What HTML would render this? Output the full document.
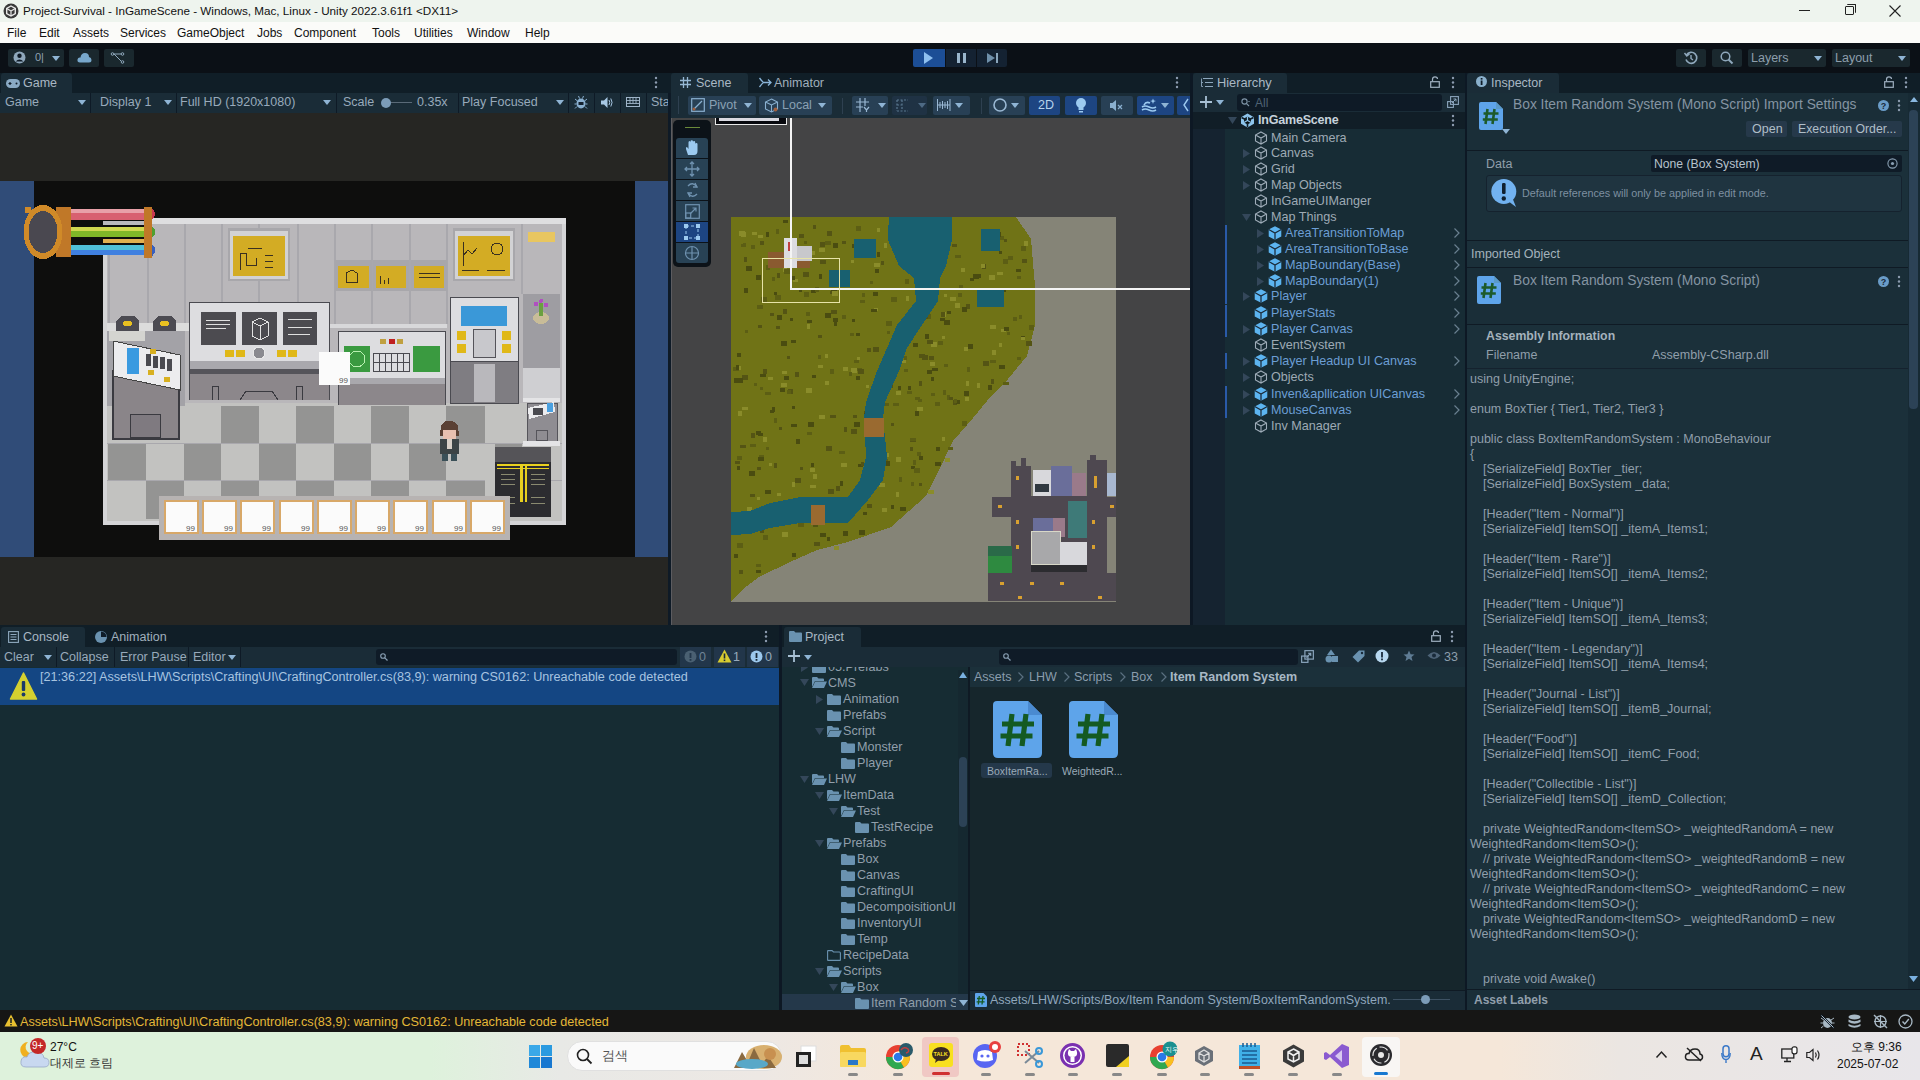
<!DOCTYPE html>
<html><head><meta charset="utf-8">
<style>
*{box-sizing:border-box}
html,body{margin:0;padding:0}
body{width:1920px;height:1080px;position:relative;overflow:hidden;background:#1c2d3a;font-family:"Liberation Sans",sans-serif;color:#b4c0c8;font-size:12.5px}
.a{position:absolute}
.t{position:absolute;white-space:pre;line-height:1}
.btn{position:absolute;background:#24384a;border-radius:2px}
.dd{position:absolute;width:0;height:0;border-left:4px solid transparent;border-right:4px solid transparent;border-top:5px solid #8fb4d4}
svg{position:absolute;overflow:visible}
</style></head><body>
<!-- title bar -->
<div class="a" style="left:0;top:0;width:1920px;height:22px;background:#eef4ee"></div>
<svg style="left:3px;top:3px" width="16" height="16" viewBox="0 0 16 16"><circle cx="8" cy="8" r="7.5" fill="#3a3a3a"/><path d="M8 3 L12.3 5.5 L12.3 10.5 L8 13 L3.7 10.5 L3.7 5.5 Z" fill="none" stroke="#e8e8e8" stroke-width="1.4"/><path d="M8 8 L8 13 M8 8 L3.7 5.5 M8 8 L12.3 5.5" stroke="#e8e8e8" stroke-width="1.2"/></svg>
<div class="t" style="left:23px;top:5px;font-size:11.7px;color:#111">Project-Survival - InGameScene - Windows, Mac, Linux - Unity 2022.3.61f1 &lt;DX11&gt;</div>
<div class="a" style="left:1799px;top:10px;width:11px;height:1px;background:#222"></div>
<div class="a" style="left:1845px;top:6px;width:9px;height:9px;border:1px solid #222;border-radius:1px"></div>
<div class="a" style="left:1847px;top:4px;width:9px;height:9px;border-top:1px solid #222;border-right:1px solid #222;border-radius:1px"></div>
<svg style="left:1889px;top:5px" width="12" height="12"><path d="M0.5 0.5 L11.5 11.5 M11.5 0.5 L0.5 11.5" stroke="#222" stroke-width="1.1"/></svg>

<!-- menu bar -->
<div class="a" style="left:0;top:22px;width:1920px;height:21px;background:#fbfbf9"></div>
<div class="t" style="left:7px;top:27px;font-size:12px;color:#111">File</div>
<div class="t" style="left:39px;top:27px;font-size:12px;color:#111">Edit</div>
<div class="t" style="left:73px;top:27px;font-size:12px;color:#111">Assets</div>
<div class="t" style="left:120px;top:27px;font-size:12px;color:#111">Services</div>
<div class="t" style="left:177px;top:27px;font-size:12px;color:#111">GameObject</div>
<div class="t" style="left:257px;top:27px;font-size:12px;color:#111">Jobs</div>
<div class="t" style="left:294px;top:27px;font-size:12px;color:#111">Component</div>
<div class="t" style="left:372px;top:27px;font-size:12px;color:#111">Tools</div>
<div class="t" style="left:414px;top:27px;font-size:12px;color:#111">Utilities</div>
<div class="t" style="left:467px;top:27px;font-size:12px;color:#111">Window</div>
<div class="t" style="left:525px;top:27px;font-size:12px;color:#111">Help</div>

<!-- main toolbar -->
<div class="a" style="left:0;top:43px;width:1920px;height:30px;background:#0b1016"></div>
<div class="btn" style="left:8px;top:49px;width:56px;height:18px;background:#1a282e"></div>
<svg style="left:13px;top:51px" width="13" height="13" viewBox="0 0 13 13"><circle cx="6.5" cy="6.5" r="6" fill="#8fa8bc"/><circle cx="6.5" cy="4.8" r="2.2" fill="#0e1a26"/><path d="M2.5 10.5 Q6.5 6.5 10.5 10.5" fill="#0e1a26"/></svg>
<div class="t" style="left:35px;top:52px;font-size:11px;color:#8fa0b0">0|</div>
<div class="dd" style="left:52px;top:56px;border-top-color:#8fb4d4"></div>
<div class="btn" style="left:69px;top:49px;width:30px;height:18px;background:#1a282e"></div>
<svg style="left:77px;top:52px" width="15" height="11" viewBox="0 0 15 11"><path d="M3 10.5 Q0 10.5 0.5 7.5 Q1 5 3.5 5.5 Q4 1 8 1 Q12 1 12 5 Q14.5 5.5 14.5 8 Q14.5 10.5 12 10.5 Z" fill="#78a8cc"/></svg>
<div class="btn" style="left:104px;top:49px;width:30px;height:18px;background:#1a282e"></div>
<svg style="left:111px;top:52px" width="14" height="12" viewBox="0 0 14 12"><circle cx="1.5" cy="2" r="1.3" fill="none" stroke="#8fa8bc"/><circle cx="11.5" cy="2" r="1.3" fill="none" stroke="#8fa8bc"/><circle cx="11.5" cy="10" r="1.3" fill="none" stroke="#8fa8bc"/><path d="M3 2 L10 2 M3 2 L10 9" stroke="#8fa8bc" fill="none"/></svg>

<!-- play controls -->
<div class="btn" style="left:913px;top:49px;width:32px;height:18px;background:#1c4e96;border-radius:2px 0 0 2px"></div>
<svg style="left:924px;top:52px" width="10" height="12"><path d="M0 0 L9 6 L0 12 Z" fill="#8ec0f0"/></svg>
<div class="btn" style="left:946px;top:49px;width:30px;height:18px;background:#142232;border-radius:0"></div>
<div class="a" style="left:957px;top:53px;width:3px;height:10px;background:#9ab6cc"></div>
<div class="a" style="left:963px;top:53px;width:3px;height:10px;background:#9ab6cc"></div>
<div class="btn" style="left:977px;top:49px;width:30px;height:18px;background:#142232;border-radius:0 2px 2px 0"></div>
<svg style="left:987px;top:53px" width="12" height="10"><path d="M0 0 L8 5 L0 10 Z" fill="#6f90aa"/><rect x="9" y="0" width="2" height="10" fill="#8aa6bc"/></svg>

<!-- right toolbar -->
<div class="btn" style="left:1676px;top:49px;width:30px;height:18px;background:#1a282e"></div>
<svg style="left:1684px;top:51px" width="14" height="14" viewBox="0 0 14 14"><path d="M2.5 4 A5.5 5.5 0 1 1 2 8.5" fill="none" stroke="#8fa8bc" stroke-width="1.6"/><path d="M0.5 2 L2.8 5 L5.5 3" fill="none" stroke="#8fa8bc" stroke-width="1.4"/><path d="M7 4 L7 7.5 L9 9" fill="none" stroke="#8fa8bc" stroke-width="1.4"/></svg>
<div class="btn" style="left:1712px;top:49px;width:30px;height:18px;background:#1a282e"></div>
<svg style="left:1720px;top:51px" width="14" height="14"><circle cx="5.5" cy="5.5" r="4.3" fill="none" stroke="#8fa8bc" stroke-width="1.5"/><path d="M8.5 8.5 L12.5 12.5" stroke="#8fa8bc" stroke-width="2"/></svg>
<div class="btn" style="left:1748px;top:49px;width:78px;height:18px;background:#1a282e"></div>
<div class="t" style="left:1751px;top:52px;font-size:12.5px;color:#8d9eac">Layers</div>
<div class="dd" style="left:1814px;top:56px"></div>
<div class="btn" style="left:1832px;top:49px;width:78px;height:18px;background:#1a282e"></div>
<div class="t" style="left:1835px;top:52px;font-size:12.5px;color:#8d9eac">Layout</div>
<div class="dd" style="left:1898px;top:56px"></div>
<!-- panel header strips -->
<div class="a" style="left:0;top:73px;width:1920px;height:20px;background:#101e27"></div>
<!-- Game tab -->
<div class="a" style="left:1px;top:73px;width:71px;height:20px;background:#1a2c37;border-radius:3px 3px 0 0"></div>
<svg style="left:6px;top:79px" width="14" height="9" viewBox="0 0 14 9"><rect x="0" y="0" width="14" height="9" rx="4.5" fill="#8aaac4"/><path d="M2.5 4.5 H5.5 M4 3 V6" stroke="#0f1c28" stroke-width="1.2"/><circle cx="10.5" cy="4.5" r="1" fill="#0f1c28"/></svg>
<div class="t" style="left:23px;top:77px;font-size:12.5px;color:#a9b8c4">Game</div>
<svg style="left:654px;top:76px" width="4" height="13"><circle cx="2" cy="2" r="1.2" fill="#8d9cb0"/><circle cx="2" cy="6.5" r="1.2" fill="#8d9cb0"/><circle cx="2" cy="11" r="1.2" fill="#8d9cb0"/></svg>

<!-- Game toolbar -->
<div class="a" style="left:0;top:93px;width:671px;height:20px;background:#1a2c37"></div>
<div class="t" style="left:5px;top:96px;font-size:12.5px;color:#98aabb">Game</div>
<div class="dd" style="left:78px;top:100px"></div>
<div class="a" style="left:90px;top:93px;width:1px;height:20px;background:#0e1a26"></div>
<div class="t" style="left:100px;top:96px;font-size:12.5px;color:#98aabb">Display 1</div>
<div class="dd" style="left:164px;top:100px"></div>
<div class="a" style="left:176px;top:93px;width:1px;height:20px;background:#0e1a26"></div>
<div class="t" style="left:180px;top:96px;font-size:12.5px;color:#98aabb">Full HD (1920x1080)</div>
<div class="dd" style="left:323px;top:100px"></div>
<div class="a" style="left:336px;top:93px;width:1px;height:20px;background:#0e1a26"></div>
<div class="t" style="left:343px;top:96px;font-size:12.5px;color:#98aabb">Scale</div>
<div class="a" style="left:386px;top:102px;width:26px;height:1px;background:#5a6a78"></div>
<div class="a" style="left:381px;top:98px;width:10px;height:10px;border-radius:5px;background:#7c9cb8"></div>
<div class="t" style="left:417px;top:96px;font-size:12.5px;color:#98aabb">0.35x</div>
<div class="a" style="left:458px;top:93px;width:1px;height:20px;background:#0e1a26"></div>
<div class="t" style="left:462px;top:96px;font-size:12.5px;color:#98aabb">Play Focused</div>
<div class="dd" style="left:556px;top:100px"></div>
<div class="a" style="left:568px;top:93px;width:1px;height:20px;background:#0e1a26"></div>
<svg style="left:574px;top:95px" width="14" height="14" viewBox="0 0 14 14"><ellipse cx="7" cy="8.5" rx="4.5" ry="5" fill="#8ab0d0"/><rect x="4.5" y="7" width="5" height="3" fill="#13202e"/><path d="M1 4 L3.5 6 M13 4 L10.5 6 M0.5 9 H2.5 M13.5 9 H11.5 M1 13.5 L3 11.5 M13 13.5 L11 11.5 M4.5 1 L5.5 3.5 M9.5 1 L8.5 3.5" stroke="#8ab0d0" stroke-width="1"/></svg>
<div class="a" style="left:594px;top:93px;width:1px;height:20px;background:#0e1a26"></div>
<svg style="left:601px;top:97px" width="12" height="11" viewBox="0 0 12 11"><path d="M0 3.5 H3 L6.5 0 V11 L3 7.5 H0 Z" fill="#a8c8e4"/><path d="M8 3 Q9.5 5.5 8 8 M9.8 1.5 Q12.3 5.5 9.8 9.5" fill="none" stroke="#a8c8e4" stroke-width="1"/></svg>
<div class="a" style="left:620px;top:93px;width:1px;height:20px;background:#0e1a26"></div>
<svg style="left:626px;top:97px" width="14" height="10" viewBox="0 0 14 10"><rect x="0.5" y="0.5" width="13" height="9" fill="none" stroke="#9fb4c8"/><path d="M0.5 3.5 H13.5 M0.5 6.5 H13.5 M4 0.5 V6.5 M7 0.5 V6.5 M10 0.5 V6.5" stroke="#9fb4c8" stroke-width="0.9"/></svg>
<div class="a" style="left:646px;top:93px;width:1px;height:20px;background:#0e1a26"></div>
<div class="t" style="left:651px;top:96px;font-size:12.5px;color:#98aabb">Sta</div>
<div class="a" style="left:668px;top:93px;width:3px;height:532px;background:#0e1a26"></div>

<!-- Scene tab -->
<div class="a" style="left:671px;top:73px;width:77px;height:20px;background:#1a2c37;border-radius:3px 3px 0 0"></div>
<svg style="left:680px;top:77px" width="11" height="11" viewBox="0 0 11 11"><path d="M3.5 0 V11 M7.5 0 V11 M0 3.5 H11 M0 7.5 H11" stroke="#96b8d4" stroke-width="1.3"/></svg>
<div class="t" style="left:696px;top:77px;font-size:12.5px;color:#a9b8c4">Scene</div>
<svg style="left:759px;top:77px" width="13" height="11" viewBox="0 0 13 11"><path d="M0.5 1 Q3 4.5 4.5 5.5 Q3 6.5 0.5 10 M4.5 5.5 H12 M9 2.5 L12 5.5 L9 8.5" fill="none" stroke="#8ab4d8" stroke-width="1.3"/></svg>
<div class="t" style="left:774px;top:77px;font-size:12.5px;color:#a0b0bd">Animator</div>
<svg style="left:1175px;top:76px" width="4" height="13"><circle cx="2" cy="2" r="1.2" fill="#8d9cb0"/><circle cx="2" cy="6.5" r="1.2" fill="#8d9cb0"/><circle cx="2" cy="11" r="1.2" fill="#8d9cb0"/></svg>

<!-- Hierarchy tab -->
<div class="a" style="left:1193px;top:73px;width:94px;height:20px;background:#1a2c37;border-radius:3px 3px 0 0"></div>
<svg style="left:1201px;top:78px" width="12" height="10" viewBox="0 0 12 10"><path d="M2 0.5 H12 M4 4.5 H12 M4 8.5 H12" stroke="#8ea8be" stroke-width="1.1"/><path d="M0.5 0.5 V8.5 M0.5 4.5 H2 M0.5 8.5 H2" stroke="#8ea8be" stroke-width="0.9"/></svg>
<div class="t" style="left:1217px;top:77px;font-size:12.8px;color:#a9b8c4">Hierarchy</div>
<svg style="left:1430px;top:76px" width="10" height="12" viewBox="0 0 10 12"><rect x="0.7" y="5.7" width="8.6" height="5.6" fill="none" stroke="#9fb0c0" stroke-width="1.2"/><path d="M2.5 5.5 V3.5 Q2.5 0.8 5 0.8 Q7.5 0.8 7.5 3" fill="none" stroke="#9fb0c0" stroke-width="1.2"/></svg>
<svg style="left:1451px;top:76px" width="4" height="13"><circle cx="2" cy="2" r="1.2" fill="#8d9cb0"/><circle cx="2" cy="6.5" r="1.2" fill="#8d9cb0"/><circle cx="2" cy="11" r="1.2" fill="#8d9cb0"/></svg>

<!-- Inspector tab -->
<div class="a" style="left:1467px;top:73px;width:92px;height:20px;background:#1a2c37;border-radius:3px 3px 0 0"></div>
<svg style="left:1476px;top:76px" width="11" height="11"><circle cx="5.5" cy="5.5" r="5.5" fill="#8ab0cc"/><rect x="4.7" y="4.5" width="1.8" height="4.5" fill="#0f1c28"/><rect x="4.7" y="2" width="1.8" height="1.6" fill="#0f1c28"/></svg>
<div class="t" style="left:1491px;top:77px;font-size:12.5px;color:#a9b8c4">Inspector</div>
<svg style="left:1884px;top:76px" width="10" height="12" viewBox="0 0 10 12"><rect x="0.7" y="5.7" width="8.6" height="5.6" fill="none" stroke="#9fb0c0" stroke-width="1.2"/><path d="M2.5 5.5 V3.5 Q2.5 0.8 5 0.8 Q7.5 0.8 7.5 3" fill="none" stroke="#9fb0c0" stroke-width="1.2"/></svg>
<svg style="left:1904px;top:76px" width="4" height="13"><circle cx="2" cy="2" r="1.2" fill="#8d9cb0"/><circle cx="2" cy="6.5" r="1.2" fill="#8d9cb0"/><circle cx="2" cy="11" r="1.2" fill="#8d9cb0"/></svg>

<!-- vertical panel separators -->
<div class="a" style="left:1190px;top:73px;width:3px;height:552px;background:#0d1824"></div>
<div class="a" style="left:1465px;top:73px;width:2px;height:937px;background:#0d1824"></div>
<!-- Game view -->
<svg style="left:0;top:113px" width="668" height="512" viewBox="0 113 668 512" shape-rendering="crispEdges">
<rect x="0" y="113" width="668" height="512" fill="#262623"/>
<rect x="0" y="181" width="668" height="376" fill="#0e0e0d"/>
<rect x="0" y="181" width="34" height="376" fill="#304c78"/>
<rect x="635" y="181" width="33" height="376" fill="#304c78"/>
<!-- room -->
<rect x="103" y="218" width="463" height="307" fill="#d4d4d6"/>
<rect x="107" y="223" width="455" height="298" fill="#b9b7ba"/>
<!-- top wall band -->
<rect x="103" y="218" width="463" height="6" fill="#dedee0"/>
<!-- wall panel lines -->
<g fill="#a9a8ad">
<rect x="108" y="224" width="2" height="100"/><rect x="147" y="224" width="2" height="100"/><rect x="184" y="224" width="2" height="100"/><rect x="221" y="224" width="2" height="78"/><rect x="258" y="224" width="2" height="78"/><rect x="297" y="224" width="2" height="78"/><rect x="334" y="224" width="2" height="100"/><rect x="371" y="224" width="2" height="100"/><rect x="409" y="224" width="2" height="100"/><rect x="446" y="224" width="2" height="100"/><rect x="521" y="224" width="2" height="70"/>
</g>
<rect x="107" y="324" width="340" height="4" fill="#d8d8da"/>
<!-- yellow screens -->
<rect x="228" y="228" width="62" height="53" fill="#a8a7ab"/><rect x="230" y="231" width="58" height="48" fill="#d2d2d4"/><rect x="233" y="236" width="52" height="40" fill="#d3ac24"/>
<g stroke="#3a3020" stroke-width="1" fill="none"><path d="M240 270 V253 H246 V265 H256 V258 M248 248 H262 M265 255 H273 M265 261 H273 M265 267 H273"/></g>
<rect x="453" y="228" width="62" height="53" fill="#a8a7ab"/><rect x="455" y="231" width="58" height="48" fill="#d2d2d4"/><rect x="458" y="236" width="52" height="40" fill="#d3ac24"/>
<g stroke="#3a3020" stroke-width="1" fill="none"><path d="M463 266 V242 M463 256 L468 250 L472 254 L477 248"/><circle cx="497" cy="249" r="6"/><path d="M462 270 H479 M487 270 H505"/></g>
<rect x="335" y="260" width="37" height="31" fill="#a8a7ab"/><rect x="338" y="266" width="31" height="22" fill="#d3ac24"/>
<rect x="373" y="260" width="36" height="31" fill="#a8a7ab"/><rect x="376" y="266" width="30" height="22" fill="#d3ac24"/>
<rect x="411" y="260" width="36" height="31" fill="#a8a7ab"/><rect x="414" y="266" width="30" height="22" fill="#d3ac24"/>
<g stroke="#3a3020" stroke-width="1" fill="none"><path d="M346 282 V273 L352 270 L357 273 V282 Z M380 284 V276 M384 284 V280 M388 284 V278 M419 273 H440 M419 277 H440"/></g>
<rect x="528" y="232" width="27" height="10" fill="#e8c660"/>
<!-- floor -->
<rect x="107" y="403" width="455" height="118" fill="#c2c2c0"/>
<g fill="#949493">
<rect x="221" y="406" width="38" height="38"/><rect x="296" y="406" width="38" height="38"/><rect x="371" y="406" width="38" height="38"/><rect x="446" y="406" width="39" height="38"/>
<rect x="108" y="444" width="38" height="37"/><rect x="184" y="444" width="37" height="37"/><rect x="259" y="444" width="37" height="37"/><rect x="334" y="444" width="37" height="37"/><rect x="409" y="444" width="37" height="37"/><rect x="485" y="444" width="37" height="37"/>
<rect x="146" y="481" width="38" height="38"/><rect x="221" y="481" width="38" height="38"/><rect x="296" y="481" width="38" height="38"/><rect x="371" y="481" width="38" height="38"/><rect x="446" y="481" width="39" height="38"/>
</g>
<g fill="#a9a8ad"><rect x="107" y="443" width="455" height="1"/><rect x="107" y="480" width="455" height="1"/></g>
<!-- right column -->
<rect x="523" y="294" width="37" height="74" fill="#9e9da2"/>
<ellipse cx="541" cy="318" rx="8" ry="6" fill="#c8bc98"/><rect x="539" y="303" width="4" height="13" fill="#6aa040"/><circle cx="536" cy="304" r="2.2" fill="#b050c0"/><circle cx="546" cy="305" r="2.2" fill="#b050c0"/><circle cx="541" cy="301" r="2" fill="#b050c0"/>
<rect x="523" y="368" width="37" height="30" fill="#cfcfd2"/>
<rect x="523" y="398" width="37" height="4" fill="#e4e4e6"/>
<rect x="527" y="403" width="30" height="38" fill="#8f8d92" stroke="#55545a"/>
<rect x="536" y="430" width="11" height="10" fill="none" stroke="#55545a"/>
<path d="M528 408 L554 402 L555 412 L529 419 Z" fill="#ececee"/><rect x="547" y="403" width="6" height="9" fill="#4aa0e0"/><rect x="533" y="408" width="10" height="7" fill="#4a4a50"/>
<rect x="523" y="441" width="37" height="5" fill="#e4e4e6"/>
<!-- left machine -->
<rect x="107" y="330" width="78" height="76" fill="#a3a2a7"/>
<rect x="113" y="371" width="66" height="68" fill="#8a8589"/><rect x="113" y="371" width="66" height="68" fill="none" stroke="#3a3a40" stroke-width="1.5"/>
<rect x="130" y="414" width="30" height="23" fill="#7f7a80" stroke="#3a3a40"/>
<path d="M113 341 L180 355 L180 390 L113 376 Z" fill="#ececee" stroke="#444" stroke-width="1"/>
<rect x="127" y="348" width="12" height="26" fill="#3a9ae0"/>
<g fill="#4a4a50"><rect x="146" y="354" width="5" height="12"/><rect x="153" y="356" width="5" height="12"/><rect x="160" y="357" width="5" height="12"/><rect x="167" y="359" width="5" height="12"/></g>
<g fill="#d8b020"><rect x="150" y="349" width="6" height="5"/><rect x="148" y="370" width="6" height="5"/><rect x="164" y="377" width="6" height="5"/></g>
<!-- lamps -->
<rect x="107" y="323" width="82" height="8" fill="#dcdcdc"/>
<path d="M121 316 H134 L139 321 V331 H116 V321 Z" fill="#4c4b52"/><ellipse cx="127.5" cy="323.5" rx="4.5" ry="3" fill="#e8c020"/>
<path d="M158 316 H171 L176 321 V331 H153 V321 Z" fill="#4c4b52"/><ellipse cx="164.5" cy="323.5" rx="4.5" ry="3" fill="#e8c020"/>
<rect x="109" y="331" width="36" height="10" fill="#d4d4d0"/>
<!-- console desk 1 -->
<rect x="189" y="302" width="141" height="98" fill="#4a4a50"/>
<rect x="190" y="303" width="139" height="58" fill="#dddde0"/>
<rect x="201" y="312" width="35" height="33" fill="#4c4b50"/><rect x="242" y="312" width="35" height="33" fill="#4c4b50"/><rect x="283" y="312" width="34" height="33" fill="#4c4b50"/>
<g stroke="#e0e0e0" fill="none" stroke-width="1"><path d="M206 320 H230 M206 324 H230 M206 328 H226 M252 322 L260 318 L268 322 V336 L260 340 L252 336 Z M252 322 L260 326 L268 322 M260 326 V340 M288 319 H312 M288 327 H312 M288 334 H310"/></g>
<g fill="#e0b818"><rect x="225" y="350" width="9" height="7"/><rect x="236" y="350" width="9" height="7"/><rect x="277" y="350" width="9" height="7"/><rect x="288" y="350" width="9" height="7"/></g>
<circle cx="259" cy="353" r="6" fill="#8a8a90" stroke="#e8e8e8"/>
<rect x="190" y="361" width="139" height="8" fill="#a9a8ad"/>
<rect x="190" y="369" width="139" height="5" fill="#55545a"/>
<rect x="190" y="374" width="139" height="26" fill="#8c878b"/>
<g fill="none" stroke="#3a3a40"><path d="M212 400 V386 H218 V400 M296 400 V386 H302 V400 M240 400 L246 391 H272 L278 400"/></g>
<!-- console desk 2 -->
<rect x="338" y="331" width="108" height="74" fill="#4a4a50"/>
<rect x="339" y="332" width="106" height="46" fill="#dddde0"/>
<rect x="344" y="346" width="26" height="26" fill="#3a9a40"/><circle cx="357" cy="359" r="8" fill="none" stroke="#b8f0b0"/>
<rect x="413" y="346" width="27" height="26" fill="#3a9a40"/>
<g fill="none" stroke="#4a4a50"><path d="M373 353 H409 V371 H373 Z M379 353 V371 M385 353 V371 M391 353 V371 M397 353 V371 M403 353 V371 M373 362 H409"/></g>
<g fill="#c0a040"><rect x="380" y="339" width="6" height="5"/><rect x="397" y="339" width="6" height="5"/></g><rect x="389" y="339" width="6" height="5" fill="#c02020"/>
<rect x="339" y="378" width="106" height="6" fill="#a9a8ad"/>
<rect x="339" y="384" width="106" height="21" fill="#8c878b"/>
<!-- keypad machine -->
<rect x="450" y="297" width="69" height="107" fill="#4a4a50"/>
<rect x="451" y="298" width="67" height="63" fill="#dddde0"/>
<rect x="461" y="306" width="46" height="20" fill="#3a98d8"/>
<g fill="#e0b818"><rect x="457" y="331" width="9" height="9"/><rect x="457" y="344" width="9" height="9"/><rect x="502" y="331" width="9" height="9"/><rect x="502" y="344" width="9" height="9"/></g>
<rect x="473" y="329" width="22" height="28" fill="#c8c8cc" stroke="#55545a"/>
<rect x="451" y="362" width="67" height="41" fill="#7f7d82"/><rect x="474" y="364" width="21" height="38" fill="#b9b8bc"/>
<!-- dark device -->
<rect x="485" y="444" width="10" height="37" fill="#c2c2c0"/>
<rect x="495" y="447" width="56" height="70" fill="#2c2c30"/>
<rect x="495" y="447" width="56" height="15" fill="#555458"/>
<g fill="#e8d020"><rect x="497" y="464" width="52" height="2"/><rect x="497" y="468" width="52" height="1"/><rect x="520" y="464" width="3" height="38"/><rect x="525" y="464" width="2" height="38"/></g>
<g fill="#8a8a70"><rect x="501" y="474" width="14" height="1"/><rect x="501" y="479" width="14" height="1"/><rect x="501" y="484" width="14" height="1"/><rect x="531" y="474" width="14" height="1"/><rect x="531" y="479" width="14" height="1"/><rect x="531" y="484" width="14" height="1"/><rect x="501" y="497" width="14" height="1"/><rect x="501" y="503" width="14" height="1"/><rect x="531" y="497" width="14" height="1"/><rect x="531" y="503" width="14" height="1"/></g>
<!-- character -->
<path d="M441 425 Q449 416 458 425 L459 436 L440 436 Z" fill="#5a4034"/>
<rect x="443" y="430" width="13" height="9" fill="#e8c0b0"/>
<rect x="440" y="439" width="19" height="15" fill="#3c4446"/>
<rect x="447" y="439" width="5" height="10" fill="#d8d0c8"/>
<rect x="442" y="454" width="6" height="7" fill="#3a5058"/><rect x="451" y="454" width="6" height="7" fill="#3a5058"/>
<!-- inventory bar -->
<rect x="159" y="496" width="351" height="44" fill="#b7b3b2"/>
<g fill="#fbfbfb" stroke="#d8a868" stroke-width="2">
<rect x="165" y="501" width="33" height="32"/><rect x="203" y="501" width="33" height="32"/><rect x="241" y="501" width="33" height="32"/><rect x="280" y="501" width="33" height="32"/><rect x="318" y="501" width="33" height="32"/><rect x="356" y="501" width="33" height="32"/><rect x="394" y="501" width="33" height="32"/><rect x="433" y="501" width="33" height="32"/><rect x="471" y="501" width="33" height="32"/>
</g>
<g font-family="Liberation Sans" font-size="8" fill="#555"><text x="186" y="531">99</text><text x="224" y="531">99</text><text x="262" y="531">99</text><text x="301" y="531">99</text><text x="339" y="531">99</text><text x="377" y="531">99</text><text x="415" y="531">99</text><text x="454" y="531">99</text><text x="492" y="531">99</text></g>
<!-- cursor item -->
<rect x="319" y="352" width="31" height="33" fill="#fbfbfb"/>
<text x="339" y="383" font-family="Liberation Sans" font-size="8" fill="#555">99</text>
<!-- HUD -->
<g>
<rect x="71" y="209" width="73" height="11" fill="#d86070"/><rect x="71" y="209" width="73" height="4" fill="#e8a0a8"/>
<rect x="71" y="220" width="73" height="7" fill="#0e0e0d"/><rect x="103" y="221" width="41" height="4" fill="#b8b8bc"/>
<rect x="71" y="227" width="73" height="10" fill="#80b828"/><rect x="71" y="227" width="73" height="4" fill="#d0d850"/>
<rect x="71" y="237" width="73" height="8" fill="#0e0e0d"/><rect x="103" y="239" width="41" height="4" fill="#e0b050"/>
<rect x="71" y="245" width="73" height="10" fill="#4080e0"/><rect x="71" y="245" width="73" height="5" fill="#50c0d8"/>
<path d="M152 208 Q158 214 152 220 Z" fill="#c83850"/><path d="M152 227 Q159 232 152 238 Z" fill="#50a030"/><path d="M152 245 Q159 250 152 256 Z" fill="#3860c0"/>
<rect x="144" y="207" width="8" height="51" fill="#c07828"/>
<rect x="56" y="207" width="15" height="50" fill="#c07828"/>
<ellipse cx="43" cy="232" rx="19.5" ry="27" fill="#d08a28"/>
<ellipse cx="43" cy="232" rx="14.5" ry="21" fill="#4a4850"/>
<circle cx="28" cy="210" r="3.5" fill="#d08a28"/>
</g>
</svg>
<!-- Scene toolbar -->
<div class="a" style="left:671px;top:93px;width:519px;height:25px;background:#1a2c37"></div>
<div class="a" style="left:678px;top:96px;width:1px;height:18px;background:#2e4050"></div>
<div class="btn" style="left:688px;top:96px;width:68px;height:19px;background:#284055"></div>
<svg style="left:691px;top:98px" width="14" height="14" viewBox="0 0 14 14"><rect x="0.7" y="0.7" width="12.6" height="12.6" fill="none" stroke="#8ab0d0" stroke-width="1.2"/><path d="M3 11 L11 3" stroke="#8ab0d0" stroke-width="1.2"/><circle cx="3" cy="11" r="1.5" fill="#a06040"/></svg>
<div class="t" style="left:709px;top:99px;font-size:12.5px;color:#8aa0b4">Pivot</div>
<div class="dd" style="left:744px;top:103px"></div>
<div class="btn" style="left:759px;top:96px;width:73px;height:19px;background:#284055"></div>
<svg style="left:764px;top:98px" width="15" height="15" viewBox="0 0 15 15"><path d="M7.5 1 L13.5 4 V11 L7.5 14 L1.5 11 V4 Z M1.5 4 L7.5 7 L13.5 4 M7.5 7 V14" fill="none" stroke="#8ab0d0" stroke-width="1.1"/><circle cx="11.5" cy="11.5" r="2" fill="#a06040"/></svg>
<div class="t" style="left:782px;top:99px;font-size:12.5px;color:#8aa0b4">Local</div>
<div class="dd" style="left:818px;top:103px"></div>
<div class="a" style="left:842px;top:98px;width:1px;height:16px;background:#2e4050"></div>
<div class="btn" style="left:852px;top:96px;width:36px;height:19px;background:#284055"></div>
<svg style="left:856px;top:98px" width="14" height="14" viewBox="0 0 14 14"><path d="M4 0 V14 M9 0 V8 M0 4 H13 M0 9 H7 M8 9 L10.5 12 L13 9 M10.5 12 V14" fill="none" stroke="#9ab8d4" stroke-width="1.2"/></svg>
<div class="dd" style="left:878px;top:103px"></div>
<div class="btn" style="left:892px;top:96px;width:35px;height:19px;background:#1f3244"></div>
<svg style="left:896px;top:99px" width="13" height="13" viewBox="0 0 13 13"><path d="M1 1 H12 M1 1 V12 M1 6 H6 M6 1 V12 M1 12 H12" fill="none" stroke="#5a7890" stroke-width="1.2" stroke-dasharray="2 1.5"/></svg>
<div class="dd" style="left:918px;top:103px;border-top-color:#4e6a84"></div>
<div class="btn" style="left:933px;top:96px;width:37px;height:19px;background:#284055"></div>
<svg style="left:937px;top:98px" width="14" height="14" viewBox="0 0 14 14"><path d="M0.5 1 V13 M13 1 V13 M0.5 7 H13 M3 4 V10 M5.5 3 V11 M8 4 V10 M10.5 3 V11" fill="none" stroke="#9ab8d4" stroke-width="1"/></svg>
<div class="dd" style="left:955px;top:103px"></div>
<div class="a" style="left:981px;top:98px;width:1px;height:16px;background:#2e4050"></div>
<div class="btn" style="left:989px;top:96px;width:36px;height:19px;background:#284055"></div>
<svg style="left:993px;top:98px" width="14" height="14"><circle cx="7" cy="7" r="6" fill="none" stroke="#9ab8d4" stroke-width="1.6"/></svg>
<div class="dd" style="left:1011px;top:103px"></div>
<div class="btn" style="left:1029px;top:96px;width:31px;height:19px;background:#1d4582"></div>
<div class="t" style="left:1038px;top:99px;font-size:12.5px;color:#b8d4ec">2D</div>
<div class="btn" style="left:1065px;top:96px;width:32px;height:19px;background:#1d4582"></div>
<svg style="left:1075px;top:97px" width="12" height="16" viewBox="0 0 12 16"><circle cx="6" cy="6" r="5" fill="#9ccaf0"/><rect x="3.5" y="10" width="5" height="3" fill="#9ccaf0"/><rect x="4" y="14" width="4" height="1.5" fill="#9ccaf0"/></svg>
<div class="btn" style="left:1101px;top:96px;width:32px;height:19px;background:#284055"></div>
<svg style="left:1110px;top:99px" width="14" height="13" viewBox="0 0 14 13"><path d="M0 4 H2.5 L6 1 V12 L2.5 9 H0 Z" fill="#8ab0d0"/><path d="M8 6 L12 10 M12 6 L8 10" stroke="#8ab0d0" stroke-width="1.2"/></svg>
<div class="btn" style="left:1137px;top:96px;width:37px;height:19px;background:#1d4582"></div>
<svg style="left:1141px;top:98px" width="16" height="14" viewBox="0 0 16 14"><path d="M1 9 Q4 7 8 9 Q12 11 15 9 M1 12 Q4 10 8 12 Q12 14 15 12 M3 7 Q5 3 9 5" fill="none" stroke="#9ccaf0" stroke-width="1.6"/><path d="M12 0.5 L12.8 2.5 L15 3 L12.8 3.8 L12 6 L11.2 3.8 L9 3 L11.2 2.5 Z" fill="#9ccaf0"/></svg>
<div class="dd" style="left:1161px;top:103px"></div>
<div class="btn" style="left:1177px;top:96px;width:13px;height:19px;background:#1d4582;border-radius:2px 0 0 2px"></div>
<svg style="left:1183px;top:99px" width="6" height="12"><path d="M5 0 L1 6 L5 12" fill="none" stroke="#9ccaf0" stroke-width="1.4"/></svg>

<!-- Scene view -->
<svg style="left:671px;top:118px" width="519" height="507" viewBox="671 118 519 507" shape-rendering="crispEdges">
<rect x="671" y="118" width="519" height="507" fill="#444445"/>
<rect x="671" y="118" width="1" height="507" fill="#5c5c60"/>
<rect x="731" y="217" width="385" height="385" fill="#858477"/>
<path d="M731 217 L1016 217 L1031 239 L1035 286 L1035 325 L1027 356 L1008 379 L992 395 L973 418 L953 441 L938 472 L926 496 L891 527 L848 542 L817 550 L790 562 L759 577 L743 589 L731 601 Z" fill="#707316"/>
<g><rect x="829" y="276" width="3" height="3" fill="#545414"/><rect x="842" y="241" width="4" height="3" fill="#545414"/><rect x="862" y="245" width="3" height="5" fill="#8a8c2a"/><rect x="751" y="433" width="4" height="5" fill="#545414"/><rect x="904" y="369" width="4" height="3" fill="#5c5e14"/><rect x="819" y="274" width="3" height="5" fill="#4a4c10"/><rect x="899" y="477" width="3" height="5" fill="#5c5e14"/><rect x="844" y="427" width="3" height="5" fill="#545414"/><rect x="917" y="407" width="6" height="4" fill="#8a8c2a"/><rect x="907" y="391" width="5" height="3" fill="#5c5e14"/><rect x="941" y="312" width="5" height="5" fill="#8a8c2a"/><rect x="768" y="377" width="5" height="3" fill="#8a8c2a"/><rect x="756" y="431" width="5" height="4" fill="#4a4c10"/><rect x="910" y="439" width="6" height="3" fill="#545414"/><rect x="930" y="242" width="5" height="5" fill="#8a8c2a"/><rect x="818" y="365" width="5" height="3" fill="#8a8c2a"/><rect x="839" y="451" width="6" height="3" fill="#5c5e14"/><rect x="961" y="268" width="4" height="4" fill="#8a8c2a"/><rect x="782" y="371" width="5" height="3" fill="#8a8c2a"/><rect x="990" y="325" width="6" height="4" fill="#8a8c2a"/><rect x="1017" y="276" width="4" height="3" fill="#5c5e14"/><rect x="929" y="224" width="4" height="4" fill="#4a4c10"/><rect x="734" y="378" width="5" height="5" fill="#4a4c10"/><rect x="886" y="453" width="3" height="4" fill="#8a8c2a"/><rect x="851" y="368" width="6" height="5" fill="#8a8c2a"/><rect x="751" y="245" width="4" height="4" fill="#5c5e14"/><rect x="766" y="447" width="3" height="3" fill="#5c5e14"/><rect x="915" y="246" width="4" height="5" fill="#8a8c2a"/><rect x="777" y="315" width="5" height="5" fill="#4a4c10"/><rect x="874" y="263" width="6" height="4" fill="#8a8c2a"/><rect x="877" y="252" width="3" height="5" fill="#4a4c10"/><rect x="953" y="400" width="4" height="5" fill="#545414"/><rect x="840" y="481" width="3" height="5" fill="#4a4c10"/><rect x="940" y="318" width="5" height="3" fill="#4a4c10"/><rect x="962" y="421" width="5" height="5" fill="#5c5e14"/><rect x="958" y="293" width="4" height="4" fill="#5c5e14"/><rect x="792" y="406" width="3" height="3" fill="#4a4c10"/><rect x="873" y="292" width="5" height="4" fill="#4a4c10"/><rect x="1017" y="357" width="4" height="3" fill="#5c5e14"/><rect x="873" y="347" width="6" height="5" fill="#545414"/><rect x="875" y="466" width="3" height="5" fill="#545414"/><rect x="956" y="400" width="4" height="4" fill="#4a4c10"/><rect x="947" y="395" width="3" height="5" fill="#5c5e14"/><rect x="783" y="267" width="4" height="5" fill="#8a8c2a"/><rect x="973" y="274" width="6" height="5" fill="#4a4c10"/><rect x="779" y="427" width="3" height="3" fill="#545414"/><rect x="978" y="299" width="5" height="3" fill="#4a4c10"/><rect x="882" y="508" width="5" height="4" fill="#8a8c2a"/><rect x="981" y="242" width="5" height="4" fill="#8a8c2a"/><rect x="772" y="277" width="3" height="4" fill="#5c5e14"/><rect x="777" y="273" width="3" height="5" fill="#545414"/><rect x="830" y="415" width="6" height="3" fill="#545414"/><rect x="807" y="324" width="3" height="5" fill="#8a8c2a"/><rect x="900" y="507" width="3" height="4" fill="#4a4c10"/><rect x="915" y="411" width="4" height="5" fill="#4a4c10"/><rect x="867" y="421" width="6" height="5" fill="#5c5e14"/><rect x="1013" y="317" width="4" height="4" fill="#5c5e14"/><rect x="857" y="368" width="5" height="3" fill="#5c5e14"/><rect x="860" y="300" width="5" height="3" fill="#5c5e14"/><rect x="842" y="315" width="4" height="4" fill="#5c5e14"/><rect x="955" y="255" width="6" height="3" fill="#5c5e14"/><rect x="781" y="383" width="6" height="4" fill="#8a8c2a"/><rect x="791" y="340" width="5" height="3" fill="#4a4c10"/><rect x="898" y="386" width="3" height="4" fill="#4a4c10"/><rect x="887" y="331" width="3" height="3" fill="#5c5e14"/><rect x="1022" y="259" width="5" height="4" fill="#545414"/><rect x="1002" y="288" width="4" height="4" fill="#4a4c10"/><rect x="854" y="422" width="6" height="5" fill="#4a4c10"/><rect x="760" y="241" width="4" height="4" fill="#545414"/><rect x="813" y="225" width="3" height="4" fill="#545414"/><rect x="914" y="303" width="5" height="3" fill="#8a8c2a"/><rect x="918" y="235" width="4" height="3" fill="#5c5e14"/><rect x="811" y="288" width="5" height="5" fill="#4a4c10"/><rect x="891" y="297" width="6" height="5" fill="#5c5e14"/><rect x="813" y="524" width="5" height="3" fill="#545414"/><rect x="738" y="411" width="4" height="5" fill="#8a8c2a"/><rect x="806" y="388" width="6" height="5" fill="#8a8c2a"/><rect x="1021" y="336" width="4" height="3" fill="#4a4c10"/><rect x="792" y="553" width="4" height="4" fill="#4a4c10"/><rect x="737" y="456" width="5" height="4" fill="#5c5e14"/><rect x="749" y="471" width="6" height="5" fill="#4a4c10"/><rect x="911" y="482" width="3" height="4" fill="#5c5e14"/><rect x="780" y="388" width="5" height="4" fill="#4a4c10"/><rect x="825" y="354" width="3" height="4" fill="#8a8c2a"/><rect x="758" y="325" width="4" height="3" fill="#545414"/><rect x="760" y="529" width="4" height="4" fill="#545414"/><rect x="850" y="333" width="4" height="3" fill="#5c5e14"/><rect x="928" y="490" width="6" height="4" fill="#8a8c2a"/><rect x="777" y="493" width="4" height="3" fill="#8a8c2a"/><rect x="774" y="418" width="3" height="5" fill="#5c5e14"/><rect x="758" y="235" width="5" height="3" fill="#8a8c2a"/><rect x="919" y="456" width="4" height="4" fill="#4a4c10"/><rect x="734" y="521" width="3" height="5" fill="#545414"/><rect x="954" y="399" width="3" height="4" fill="#5c5e14"/><rect x="950" y="297" width="6" height="4" fill="#8a8c2a"/><rect x="756" y="564" width="5" height="3" fill="#5c5e14"/><rect x="756" y="275" width="5" height="5" fill="#4a4c10"/><rect x="917" y="270" width="6" height="3" fill="#8a8c2a"/><rect x="813" y="474" width="4" height="5" fill="#8a8c2a"/><rect x="819" y="415" width="6" height="4" fill="#8a8c2a"/><rect x="896" y="337" width="3" height="4" fill="#545414"/><rect x="819" y="248" width="6" height="4" fill="#8a8c2a"/><rect x="796" y="439" width="4" height="5" fill="#4a4c10"/><rect x="1016" y="269" width="5" height="3" fill="#4a4c10"/><rect x="877" y="228" width="3" height="4" fill="#8a8c2a"/><rect x="853" y="495" width="6" height="4" fill="#8a8c2a"/><rect x="827" y="537" width="3" height="4" fill="#4a4c10"/><rect x="982" y="264" width="4" height="5" fill="#545414"/><rect x="1001" y="329" width="5" height="3" fill="#8a8c2a"/><rect x="756" y="570" width="5" height="3" fill="#4a4c10"/><rect x="763" y="535" width="5" height="5" fill="#5c5e14"/><rect x="807" y="320" width="5" height="3" fill="#4a4c10"/><rect x="966" y="381" width="3" height="5" fill="#8a8c2a"/><rect x="896" y="492" width="3" height="5" fill="#8a8c2a"/><rect x="867" y="504" width="5" height="4" fill="#545414"/><rect x="784" y="376" width="5" height="4" fill="#4a4c10"/><rect x="810" y="468" width="5" height="4" fill="#8a8c2a"/><rect x="769" y="463" width="3" height="3" fill="#8a8c2a"/><rect x="896" y="391" width="5" height="4" fill="#8a8c2a"/><rect x="774" y="292" width="3" height="3" fill="#4a4c10"/><rect x="898" y="340" width="5" height="4" fill="#5c5e14"/><rect x="856" y="376" width="4" height="4" fill="#4a4c10"/><rect x="833" y="243" width="5" height="5" fill="#4a4c10"/><rect x="770" y="410" width="4" height="3" fill="#4a4c10"/><rect x="999" y="365" width="6" height="4" fill="#4a4c10"/><rect x="739" y="231" width="6" height="5" fill="#8a8c2a"/><rect x="733" y="367" width="6" height="4" fill="#5c5e14"/><rect x="966" y="304" width="4" height="5" fill="#545414"/><rect x="869" y="428" width="3" height="3" fill="#5c5e14"/><rect x="925" y="334" width="4" height="5" fill="#4a4c10"/><rect x="890" y="385" width="3" height="3" fill="#545414"/><rect x="790" y="318" width="3" height="3" fill="#4a4c10"/><rect x="1029" y="325" width="5" height="5" fill="#5c5e14"/><rect x="874" y="308" width="4" height="3" fill="#8a8c2a"/><rect x="942" y="336" width="3" height="3" fill="#8a8c2a"/><rect x="757" y="305" width="6" height="4" fill="#5c5e14"/><rect x="879" y="483" width="6" height="4" fill="#8a8c2a"/><rect x="792" y="521" width="3" height="3" fill="#8a8c2a"/><rect x="1021" y="337" width="4" height="3" fill="#8a8c2a"/><rect x="799" y="507" width="5" height="3" fill="#8a8c2a"/><rect x="750" y="444" width="6" height="3" fill="#5c5e14"/><rect x="740" y="445" width="6" height="3" fill="#545414"/><rect x="788" y="389" width="5" height="5" fill="#545414"/><rect x="831" y="289" width="6" height="3" fill="#4a4c10"/><rect x="930" y="362" width="5" height="4" fill="#8a8c2a"/><rect x="783" y="220" width="5" height="3" fill="#4a4c10"/><rect x="900" y="507" width="6" height="4" fill="#4a4c10"/><rect x="977" y="383" width="3" height="5" fill="#8a8c2a"/><rect x="791" y="424" width="6" height="3" fill="#4a4c10"/><rect x="742" y="375" width="6" height="3" fill="#8a8c2a"/><rect x="743" y="243" width="3" height="4" fill="#5c5e14"/><rect x="834" y="322" width="3" height="4" fill="#4a4c10"/><rect x="1007" y="332" width="3" height="3" fill="#5c5e14"/><rect x="765" y="490" width="6" height="4" fill="#4a4c10"/><rect x="772" y="407" width="3" height="5" fill="#4a4c10"/><rect x="913" y="343" width="5" height="4" fill="#4a4c10"/><rect x="885" y="367" width="4" height="3" fill="#8a8c2a"/><rect x="752" y="232" width="5" height="3" fill="#8a8c2a"/><rect x="812" y="251" width="3" height="4" fill="#8a8c2a"/><rect x="784" y="269" width="6" height="5" fill="#5c5e14"/><rect x="930" y="265" width="5" height="4" fill="#4a4c10"/><rect x="901" y="360" width="5" height="3" fill="#8a8c2a"/><rect x="806" y="312" width="4" height="4" fill="#5c5e14"/><rect x="830" y="369" width="4" height="5" fill="#5c5e14"/><rect x="926" y="257" width="6" height="3" fill="#545414"/><rect x="734" y="554" width="4" height="4" fill="#4a4c10"/><rect x="745" y="330" width="3" height="3" fill="#5c5e14"/><rect x="791" y="247" width="4" height="4" fill="#4a4c10"/><rect x="735" y="461" width="5" height="3" fill="#545414"/><rect x="843" y="273" width="4" height="4" fill="#545414"/><rect x="911" y="466" width="4" height="3" fill="#4a4c10"/><rect x="854" y="360" width="5" height="3" fill="#5c5e14"/><rect x="742" y="407" width="6" height="3" fill="#8a8c2a"/><rect x="763" y="369" width="4" height="5" fill="#545414"/><rect x="927" y="370" width="5" height="4" fill="#4a4c10"/><rect x="931" y="377" width="3" height="4" fill="#4a4c10"/><rect x="856" y="226" width="5" height="5" fill="#5c5e14"/><rect x="849" y="372" width="3" height="4" fill="#5c5e14"/><rect x="859" y="530" width="6" height="5" fill="#4a4c10"/><rect x="870" y="281" width="3" height="3" fill="#5c5e14"/><rect x="759" y="455" width="5" height="5" fill="#5c5e14"/><rect x="776" y="326" width="4" height="3" fill="#545414"/><rect x="847" y="505" width="4" height="4" fill="#5c5e14"/><rect x="982" y="235" width="6" height="4" fill="#545414"/><rect x="913" y="460" width="3" height="5" fill="#5c5e14"/><rect x="917" y="452" width="4" height="4" fill="#5c5e14"/><rect x="901" y="235" width="4" height="4" fill="#4a4c10"/><rect x="770" y="313" width="4" height="3" fill="#545414"/><rect x="931" y="342" width="6" height="5" fill="#8a8c2a"/><rect x="896" y="457" width="5" height="5" fill="#8a8c2a"/><rect x="825" y="313" width="6" height="5" fill="#4a4c10"/><rect x="866" y="385" width="3" height="3" fill="#8a8c2a"/><rect x="871" y="388" width="6" height="3" fill="#8a8c2a"/><rect x="852" y="244" width="5" height="4" fill="#4a4c10"/><rect x="760" y="387" width="3" height="3" fill="#5c5e14"/><rect x="757" y="497" width="3" height="3" fill="#8a8c2a"/><rect x="741" y="244" width="3" height="3" fill="#5c5e14"/><rect x="782" y="518" width="4" height="3" fill="#4a4c10"/><rect x="914" y="315" width="5" height="5" fill="#4a4c10"/><rect x="876" y="443" width="4" height="4" fill="#4a4c10"/><rect x="744" y="288" width="4" height="5" fill="#4a4c10"/><rect x="783" y="516" width="3" height="5" fill="#545414"/><rect x="922" y="355" width="6" height="5" fill="#545414"/><rect x="808" y="422" width="6" height="5" fill="#4a4c10"/><rect x="904" y="356" width="3" height="4" fill="#5c5e14"/><rect x="785" y="501" width="3" height="4" fill="#4a4c10"/><rect x="955" y="303" width="5" height="5" fill="#8a8c2a"/><rect x="857" y="357" width="3" height="3" fill="#8a8c2a"/><rect x="800" y="467" width="3" height="3" fill="#545414"/><rect x="901" y="334" width="5" height="5" fill="#5c5e14"/><rect x="856" y="333" width="4" height="3" fill="#4a4c10"/><rect x="918" y="399" width="4" height="3" fill="#5c5e14"/><rect x="943" y="390" width="3" height="5" fill="#5c5e14"/><rect x="852" y="319" width="3" height="3" fill="#4a4c10"/><rect x="910" y="438" width="6" height="3" fill="#5c5e14"/><rect x="1001" y="236" width="3" height="4" fill="#5c5e14"/><rect x="804" y="241" width="3" height="3" fill="#5c5e14"/><rect x="775" y="295" width="6" height="5" fill="#5c5e14"/><rect x="884" y="243" width="3" height="5" fill="#8a8c2a"/><rect x="945" y="221" width="6" height="5" fill="#8a8c2a"/><rect x="757" y="467" width="4" height="3" fill="#545414"/><rect x="811" y="463" width="3" height="4" fill="#4a4c10"/><rect x="944" y="320" width="6" height="5" fill="#4a4c10"/><rect x="999" y="251" width="3" height="3" fill="#4a4c10"/><rect x="793" y="279" width="5" height="3" fill="#8a8c2a"/><rect x="831" y="310" width="6" height="4" fill="#545414"/><rect x="988" y="385" width="4" height="5" fill="#4a4c10"/><rect x="967" y="367" width="3" height="5" fill="#5c5e14"/><rect x="776" y="229" width="3" height="5" fill="#5c5e14"/><rect x="835" y="273" width="3" height="3" fill="#545414"/><rect x="774" y="463" width="3" height="5" fill="#545414"/><rect x="952" y="244" width="5" height="3" fill="#545414"/><rect x="944" y="364" width="4" height="3" fill="#5c5e14"/><rect x="766" y="232" width="3" height="5" fill="#4a4c10"/><rect x="875" y="269" width="4" height="4" fill="#4a4c10"/><rect x="833" y="318" width="5" height="4" fill="#4a4c10"/><rect x="747" y="507" width="5" height="5" fill="#8a8c2a"/><rect x="742" y="375" width="6" height="5" fill="#545414"/><rect x="836" y="486" width="4" height="5" fill="#545414"/><rect x="904" y="328" width="6" height="3" fill="#5c5e14"/><rect x="819" y="503" width="3" height="3" fill="#4a4c10"/><rect x="879" y="405" width="4" height="4" fill="#4a4c10"/><rect x="905" y="279" width="4" height="5" fill="#5c5e14"/><rect x="881" y="261" width="3" height="4" fill="#545414"/><rect x="919" y="354" width="6" height="4" fill="#545414"/><rect x="858" y="464" width="5" height="3" fill="#4a4c10"/><rect x="882" y="363" width="4" height="4" fill="#5c5e14"/><rect x="891" y="505" width="3" height="4" fill="#4a4c10"/><rect x="867" y="429" width="5" height="3" fill="#8a8c2a"/><rect x="863" y="512" width="4" height="3" fill="#4a4c10"/><rect x="804" y="292" width="5" height="5" fill="#5c5e14"/><rect x="948" y="447" width="5" height="3" fill="#5c5e14"/><rect x="830" y="291" width="3" height="3" fill="#545414"/><rect x="791" y="276" width="4" height="4" fill="#4a4c10"/><rect x="862" y="293" width="3" height="4" fill="#5c5e14"/><rect x="737" y="543" width="6" height="5" fill="#5c5e14"/><rect x="882" y="459" width="6" height="3" fill="#5c5e14"/><rect x="809" y="499" width="3" height="5" fill="#5c5e14"/><rect x="1003" y="382" width="6" height="3" fill="#5c5e14"/><rect x="935" y="462" width="6" height="4" fill="#4a4c10"/><rect x="810" y="485" width="6" height="3" fill="#8a8c2a"/><rect x="945" y="458" width="5" height="4" fill="#8a8c2a"/><rect x="868" y="455" width="6" height="5" fill="#5c5e14"/><rect x="999" y="343" width="3" height="4" fill="#8a8c2a"/><rect x="1003" y="259" width="5" height="5" fill="#5c5e14"/><rect x="781" y="515" width="4" height="5" fill="#4a4c10"/><rect x="763" y="437" width="4" height="5" fill="#8a8c2a"/><rect x="885" y="461" width="5" height="5" fill="#4a4c10"/><rect x="795" y="478" width="6" height="5" fill="#545414"/><rect x="922" y="315" width="6" height="4" fill="#545414"/><rect x="737" y="378" width="6" height="5" fill="#4a4c10"/><rect x="905" y="260" width="5" height="5" fill="#8a8c2a"/><rect x="798" y="523" width="6" height="4" fill="#5c5e14"/><rect x="753" y="522" width="4" height="4" fill="#5c5e14"/><rect x="975" y="274" width="6" height="4" fill="#4a4c10"/><rect x="965" y="397" width="4" height="4" fill="#8a8c2a"/><rect x="935" y="402" width="5" height="4" fill="#5c5e14"/><rect x="927" y="340" width="6" height="4" fill="#545414"/><rect x="929" y="356" width="5" height="4" fill="#545414"/><rect x="758" y="433" width="5" height="3" fill="#4a4c10"/><rect x="921" y="225" width="3" height="3" fill="#545414"/><rect x="928" y="314" width="3" height="5" fill="#5c5e14"/><rect x="987" y="289" width="6" height="4" fill="#5c5e14"/><rect x="795" y="372" width="4" height="5" fill="#545414"/><rect x="792" y="482" width="3" height="5" fill="#8a8c2a"/><rect x="932" y="263" width="3" height="4" fill="#8a8c2a"/><rect x="803" y="272" width="6" height="5" fill="#545414"/><rect x="941" y="312" width="4" height="5" fill="#545414"/><rect x="781" y="341" width="6" height="5" fill="#4a4c10"/><rect x="983" y="361" width="6" height="5" fill="#545414"/><rect x="787" y="356" width="3" height="3" fill="#545414"/><rect x="885" y="403" width="4" height="3" fill="#5c5e14"/><rect x="834" y="546" width="5" height="4" fill="#8a8c2a"/><rect x="1004" y="327" width="5" height="4" fill="#4a4c10"/><rect x="820" y="533" width="6" height="4" fill="#4a4c10"/><rect x="992" y="350" width="4" height="5" fill="#8a8c2a"/><rect x="968" y="344" width="5" height="5" fill="#4a4c10"/><rect x="851" y="429" width="6" height="5" fill="#545414"/><rect x="851" y="260" width="3" height="3" fill="#8a8c2a"/><rect x="914" y="468" width="6" height="5" fill="#5c5e14"/><rect x="919" y="483" width="3" height="3" fill="#545414"/><rect x="931" y="393" width="4" height="3" fill="#5c5e14"/><rect x="991" y="379" width="3" height="5" fill="#545414"/><rect x="843" y="531" width="5" height="5" fill="#4a4c10"/><rect x="989" y="289" width="3" height="4" fill="#545414"/><rect x="861" y="462" width="3" height="4" fill="#545414"/><rect x="858" y="483" width="6" height="4" fill="#545414"/><rect x="737" y="366" width="4" height="4" fill="#8a8c2a"/><rect x="896" y="250" width="6" height="3" fill="#5c5e14"/><rect x="919" y="381" width="3" height="5" fill="#545414"/><rect x="798" y="265" width="6" height="3" fill="#4a4c10"/><rect x="947" y="311" width="4" height="3" fill="#4a4c10"/><rect x="758" y="457" width="6" height="4" fill="#4a4c10"/><rect x="1004" y="239" width="3" height="3" fill="#545414"/><rect x="737" y="466" width="3" height="4" fill="#4a4c10"/><rect x="826" y="446" width="6" height="5" fill="#545414"/><rect x="949" y="397" width="4" height="3" fill="#545414"/><rect x="841" y="463" width="6" height="4" fill="#8a8c2a"/><rect x="964" y="391" width="5" height="5" fill="#4a4c10"/><rect x="820" y="242" width="5" height="5" fill="#545414"/><rect x="825" y="381" width="4" height="4" fill="#8a8c2a"/><rect x="936" y="447" width="4" height="4" fill="#4a4c10"/><rect x="938" y="341" width="5" height="4" fill="#5c5e14"/><rect x="997" y="235" width="4" height="5" fill="#5c5e14"/><rect x="814" y="542" width="6" height="4" fill="#545414"/><rect x="893" y="403" width="6" height="3" fill="#5c5e14"/><rect x="825" y="241" width="6" height="4" fill="#5c5e14"/><rect x="736" y="365" width="3" height="5" fill="#4a4c10"/><rect x="962" y="307" width="5" height="5" fill="#4a4c10"/><rect x="875" y="442" width="4" height="3" fill="#5c5e14"/><rect x="760" y="524" width="5" height="4" fill="#4a4c10"/><rect x="853" y="415" width="4" height="3" fill="#545414"/><rect x="990" y="360" width="6" height="3" fill="#5c5e14"/><rect x="827" y="231" width="5" height="5" fill="#545414"/><rect x="761" y="297" width="6" height="5" fill="#5c5e14"/><rect x="811" y="514" width="6" height="3" fill="#8a8c2a"/><rect x="1019" y="315" width="3" height="4" fill="#5c5e14"/><rect x="741" y="232" width="5" height="5" fill="#8a8c2a"/><rect x="943" y="253" width="5" height="5" fill="#5c5e14"/><rect x="932" y="368" width="6" height="3" fill="#4a4c10"/><rect x="799" y="234" width="5" height="4" fill="#545414"/><rect x="982" y="237" width="6" height="3" fill="#545414"/><rect x="776" y="505" width="4" height="5" fill="#4a4c10"/><rect x="908" y="386" width="3" height="4" fill="#4a4c10"/><rect x="843" y="367" width="5" height="4" fill="#8a8c2a"/><rect x="783" y="309" width="4" height="5" fill="#545414"/><rect x="970" y="278" width="4" height="3" fill="#4a4c10"/><rect x="997" y="272" width="6" height="3" fill="#8a8c2a"/><rect x="867" y="348" width="4" height="4" fill="#545414"/><rect x="920" y="273" width="4" height="5" fill="#545414"/><rect x="787" y="390" width="4" height="4" fill="#5c5e14"/><rect x="812" y="375" width="4" height="3" fill="#4a4c10"/><rect x="903" y="331" width="4" height="4" fill="#8a8c2a"/><rect x="765" y="392" width="6" height="3" fill="#5c5e14"/><rect x="1024" y="241" width="4" height="5" fill="#8a8c2a"/><rect x="981" y="264" width="4" height="4" fill="#8a8c2a"/><rect x="1008" y="256" width="5" height="4" fill="#5c5e14"/><rect x="750" y="494" width="5" height="3" fill="#545414"/><rect x="864" y="411" width="4" height="4" fill="#545414"/><rect x="818" y="355" width="3" height="4" fill="#5c5e14"/><rect x="815" y="287" width="4" height="5" fill="#5c5e14"/><rect x="944" y="294" width="3" height="3" fill="#8a8c2a"/><rect x="959" y="285" width="4" height="5" fill="#5c5e14"/><rect x="906" y="296" width="3" height="5" fill="#8a8c2a"/><rect x="887" y="351" width="5" height="5" fill="#8a8c2a"/><rect x="760" y="374" width="6" height="3" fill="#4a4c10"/><rect x="807" y="432" width="5" height="3" fill="#5c5e14"/><rect x="942" y="437" width="3" height="4" fill="#8a8c2a"/><rect x="1021" y="246" width="5" height="5" fill="#5c5e14"/><rect x="828" y="489" width="6" height="5" fill="#545414"/><rect x="820" y="260" width="6" height="4" fill="#545414"/><rect x="891" y="423" width="3" height="3" fill="#545414"/><rect x="799" y="288" width="3" height="4" fill="#4a4c10"/><rect x="739" y="570" width="4" height="4" fill="#545414"/><rect x="871" y="309" width="6" height="3" fill="#4a4c10"/><rect x="746" y="266" width="6" height="5" fill="#4a4c10"/><rect x="766" y="265" width="4" height="5" fill="#5c5e14"/><rect x="989" y="275" width="6" height="5" fill="#8a8c2a"/><rect x="782" y="532" width="6" height="5" fill="#8a8c2a"/><rect x="910" y="447" width="3" height="4" fill="#545414"/><rect x="964" y="347" width="4" height="4" fill="#8a8c2a"/><rect x="1026" y="341" width="6" height="5" fill="#545414"/><rect x="829" y="275" width="5" height="3" fill="#8a8c2a"/><rect x="930" y="223" width="3" height="5" fill="#5c5e14"/><rect x="754" y="383" width="3" height="3" fill="#5c5e14"/><rect x="858" y="369" width="6" height="5" fill="#545414"/><rect x="996" y="232" width="5" height="5" fill="#4a4c10"/><rect x="744" y="257" width="3" height="5" fill="#545414"/><rect x="818" y="335" width="4" height="3" fill="#545414"/><rect x="886" y="321" width="6" height="5" fill="#5c5e14"/><rect x="864" y="413" width="5" height="4" fill="#4a4c10"/><rect x="814" y="498" width="5" height="4" fill="#5c5e14"/><rect x="926" y="295" width="5" height="4" fill="#4a4c10"/><rect x="915" y="397" width="5" height="3" fill="#5c5e14"/><rect x="832" y="291" width="6" height="5" fill="#8a8c2a"/><rect x="737" y="353" width="4" height="4" fill="#4a4c10"/></g>
<path d="M889 217 L888 240 L899 266 L914 278 L916 301 L897 325 L887 348 L877 371 L866 402 L864 418 L866 457 L860 480 L848 497 L800 497 L770 503 L750 511 L731 512 L731 535 L750 534 L770 528 L800 523 L848 523 L868 500 L883 480 L887 457 L883 418 L885 402 L899 371 L907 348 L922 325 L938 301 L940 278 L946 266 L952 240 L952 217 Z" fill="#186070"/>
<path d="M892 217 H949 Q953 222 952 240 L888 240 Q887 222 892 217 Z" fill="#186070"/>
<rect x="854" y="239" width="22" height="19" fill="#186070"/><rect x="829" y="270" width="21" height="17" fill="#186070"/><rect x="981" y="229" width="19" height="22" fill="#186070"/><rect x="977" y="288" width="27" height="19" fill="#186070"/>
<rect x="864" y="418" width="20" height="19" fill="#9a6a30"/><rect x="811" y="505" width="14" height="20" fill="#9a6a30"/>
<rect x="768" y="252" width="42" height="16" fill="#8a5a30"/>
<rect x="784" y="238" width="13" height="30" fill="#dcdce0"/><rect x="797" y="246" width="15" height="15" fill="#c8c8cc"/>
<rect x="788" y="242" width="4" height="9" fill="#c04040"/>
<g>
<rect x="1011" y="466" width="20" height="135" fill="#4e4850"/><rect x="1011" y="461" width="5" height="10" fill="#4e4850"/><rect x="1021" y="458" width="5" height="10" fill="#4e4850"/>
<rect x="1087" y="460" width="20" height="141" fill="#4e4850"/><rect x="1090" y="455" width="6" height="8" fill="#4e4850"/>
<rect x="992" y="497" width="124" height="20" fill="#4e4850"/>
<rect x="988" y="573" width="128" height="28" fill="#4e4850"/>
<rect x="1031" y="496" width="56" height="77" fill="#4e4850"/>
<rect x="1033" y="470" width="18" height="26" fill="#d8d8dc"/><rect x="1035" y="484" width="14" height="8" fill="#303840"/>
<rect x="1051" y="466" width="21" height="30" fill="#6a6e9a"/><rect x="1072" y="473" width="14" height="23" fill="#9a7a8a"/><rect x="1107" y="473" width="9" height="23" fill="#a8b8d0"/>
<rect x="1033" y="518" width="20" height="19" fill="#6a6e9a"/><rect x="1053" y="518" width="12" height="19" fill="#9a7a8a"/><rect x="1068" y="501" width="19" height="37" fill="#3e7a78"/>
<rect x="1031" y="531" width="29" height="33" fill="#a8a8aa" stroke="#d8d8c8"/><rect x="1060" y="542" width="27" height="24" fill="#d8d8dc"/>
<rect x="1031" y="565" width="56" height="7" fill="#2c2c30"/>
<rect x="988" y="546" width="24" height="27" fill="#2e8a40"/><rect x="988" y="546" width="24" height="10" fill="#2a6a48"/>
<g fill="#d8a030"><rect x="1016" y="520" width="3" height="4"/><rect x="1016" y="545" width="3" height="4"/><rect x="1092" y="520" width="3" height="4"/><rect x="1092" y="545" width="3" height="4"/><rect x="998" y="505" width="4" height="3"/><rect x="1110" y="505" width="4" height="3"/><rect x="1000" y="582" width="4" height="3"/><rect x="1030" y="582" width="4" height="3"/><rect x="1060" y="582" width="4" height="3"/><rect x="1098" y="596" width="4" height="3"/><rect x="1018" y="596" width="4" height="3"/><rect x="1094" y="476" width="3" height="12"/><rect x="1016" y="476" width="3" height="4"/></g>
</g>
</svg>
<!-- camera preview -->
<div class="a" style="left:715px;top:118px;width:72px;height:7px;background:#08090e;border:1px solid #e8e8e8;border-top:none"></div>
<div class="a" style="left:719px;top:118px;width:60px;height:3px;background:#d8d8e0"></div>
<!-- gizmo lines -->
<div class="a" style="left:790px;top:118px;width:2px;height:172px;background:#f4f4f4"></div>
<div class="a" style="left:790px;top:288px;width:400px;height:2px;background:#f4f4f4"></div>
<div class="a" style="left:762px;top:258px;width:78px;height:45px;border:1px solid #e8e4a8"></div>
<!-- tools overlay -->
<div class="a" style="left:673px;top:120px;width:38px;height:147px;background:#0c1218;border-radius:5px"></div>
<div class="a" style="left:685px;top:127px;width:15px;height:1px;background:#6a8a3a"></div>
<div class="a" style="left:676px;top:138px;width:32px;height:20px;background:#284255;border-radius:3px 3px 0 0"></div>
<div class="a" style="left:676px;top:159px;width:32px;height:20px;background:#284255"></div>
<div class="a" style="left:676px;top:180px;width:32px;height:20px;background:#284255"></div>
<div class="a" style="left:676px;top:201px;width:32px;height:20px;background:#284255"></div>
<div class="a" style="left:676px;top:222px;width:32px;height:20px;background:#1d4582"></div>
<div class="a" style="left:676px;top:243px;width:32px;height:20px;background:#284255;border-radius:0 0 3px 3px"></div>
<svg style="left:685px;top:140px" width="14" height="16" viewBox="0 0 14 16"><path d="M3 15 L1 9 Q0.5 7 2 7 L3.5 9 V2.5 Q3.5 1 4.5 1 Q5.5 1 5.5 2.5 V7 V1.5 Q5.5 0.3 6.8 0.3 Q8 0.3 8 1.5 V7 V2 Q8 1 9 1 Q10.2 1 10.2 2 V7.5 V4 Q10.2 3 11.2 3 Q12.5 3 12.5 4 V11 Q12.5 15 9 15 Z" fill="#9ccaf0"/></svg>
<svg style="left:684px;top:161px" width="16" height="16" viewBox="0 0 16 16"><path d="M8 1 V15 M1 8 H15 M6 3 L8 1 L10 3 M6 13 L8 15 L10 13 M3 6 L1 8 L3 10 M13 6 L15 8 L13 10" fill="none" stroke="#6f92b0" stroke-width="1.3"/></svg>
<svg style="left:685px;top:182px" width="15" height="16" viewBox="0 0 15 16"><path d="M3 4 Q7.5 -1 12 5 M12 12 Q7.5 17 3 11" fill="none" stroke="#6f92b0" stroke-width="1.3"/><path d="M10 1 L12 5 L8 5 M5 15 L3 11 L7 11" fill="none" stroke="#6f92b0" stroke-width="1.3"/></svg>
<svg style="left:685px;top:204px" width="15" height="15" viewBox="0 0 15 15"><rect x="0.7" y="0.7" width="13.6" height="13.6" fill="none" stroke="#6f92b0" stroke-width="1.2"/><rect x="0.7" y="9" width="5" height="5" fill="none" stroke="#6f92b0" stroke-width="1.2"/><path d="M5 10 L11 4 M7.5 4 H11 V7.5" fill="none" stroke="#6f92b0" stroke-width="1.2"/></svg>
<svg style="left:684px;top:224px" width="16" height="16" viewBox="0 0 16 16"><path d="M2 2 H14 V14 H2 Z" fill="none" stroke="#9ccaf0" stroke-width="1" stroke-dasharray="3 2"/><rect x="0" y="0" width="4" height="4" fill="#9ccaf0"/><rect x="12" y="0" width="4" height="4" fill="#9ccaf0"/><rect x="0" y="12" width="4" height="4" fill="#9ccaf0"/><rect x="12" y="12" width="4" height="4" fill="#9ccaf0"/></svg>
<svg style="left:684px;top:245px" width="16" height="16" viewBox="0 0 16 16"><circle cx="8" cy="8" r="6.5" fill="none" stroke="#6f92b0" stroke-width="1.2"/><path d="M8 2 V14 M2 8 H14" stroke="#6f92b0" stroke-width="1.2"/></svg>
<!-- Hierarchy -->
<div class="a" style="left:1193px;top:93px;width:272px;height:532px;background:#172c35"></div>
<div class="a" style="left:1193px;top:93px;width:272px;height:19px;background:#1a2c37"></div>
<div class="a" style="left:1193px;top:129px;width:32px;height:496px;background:#152330"></div>
<svg style="left:1200px;top:96px" width="12" height="12"><path d="M6 0 V12 M0 6 H12" stroke="#a8c0d4" stroke-width="1.8"/></svg>
<div class="dd" style="left:1216px;top:100px;border-top-color:#8fb4d4"></div>
<div class="a" style="left:1237px;top:94px;width:205px;height:17px;background:#0e1a26;border-radius:3px"></div>
<svg style="left:1241px;top:98px" width="11" height="10" viewBox="0 0 11 10"><circle cx="3.5" cy="3.5" r="2.6" fill="none" stroke="#7f95a8" stroke-width="1.1"/><path d="M5.3 5.3 L8 8" stroke="#7f95a8" stroke-width="1.1"/><path d="M7 3 L9 3 L8 4.3 Z" fill="#7f95a8"/></svg>
<div class="t" style="left:1255px;top:97px;font-size:12px;color:#4e6274">All</div>
<svg style="left:1447px;top:96px" width="12" height="12" viewBox="0 0 12 12"><rect x="0.6" y="5.6" width="5.8" height="5.8" fill="none" stroke="#8aa4bc" stroke-width="1.1"/><rect x="3.6" y="0.6" width="7.8" height="7.8" fill="none" stroke="#8aa4bc" stroke-width="1.1"/><path d="M5 7 L9 3 M6.5 3 H9 V5.5" fill="none" stroke="#8aa4bc" stroke-width="1"/></svg>
<div class="a" style="left:1193px;top:112px;width:272px;height:17px;background:#111e27"></div>
<svg style="left:1228px;top:117px" width="9" height="7"><path d="M0 0 H9 L4.5 7 Z" fill="#34475a"/></svg>
<svg style="left:1240px;top:113px" width="15" height="15" viewBox="0 0 15 15"><path d="M7.5 0.5 L14 4.2 V10.8 L7.5 14.5 L1 10.8 V4.2 Z" fill="#8ec4ec"/><path d="M7.5 3.5 L11 5.5 V9.5 L7.5 11.5 L4 9.5 V5.5 Z" fill="#111e27"/><path d="M7.5 7.5 V14 M7.5 7.5 L1.5 4.5 M7.5 7.5 L13.5 4.5" stroke="#111e27" stroke-width="1.6"/><path d="M7.5 3.5 V7.5 M4 9.5 L7.5 7.5 L11 9.5" stroke="#8ec4ec" stroke-width="1.2"/></svg>
<div class="t" style="left:1258px;top:114px;font-size:12.5px;color:#c6d2dc;font-weight:bold;letter-spacing:-0.2px">InGameScene</div>
<svg style="left:1451px;top:114px" width="4" height="13"><circle cx="2" cy="2" r="1.2" fill="#8d9cb0"/><circle cx="2" cy="6.5" r="1.2" fill="#8d9cb0"/><circle cx="2" cy="11" r="1.2" fill="#8d9cb0"/></svg>
<svg style="left:1254px;top:131px" width="14" height="14" viewBox="0 0 14 14"><path d="M7 1 L12.5 4 V10 L7 13 L1.5 10 V4 Z M1.5 4 L7 7 L12.5 4 M7 7 V13" fill="none" stroke="#9eacb8" stroke-width="1.1"/></svg>
<div class="t" style="left:1271px;top:132px;font-size:12.6px;color:#9eaab4">Main Camera</div>
<svg style="left:1243px;top:149px" width="7" height="9"><path d="M0 0 V9 L7 4.5 Z" fill="#34475a"/></svg>
<svg style="left:1254px;top:146px" width="14" height="14" viewBox="0 0 14 14"><path d="M7 1 L12.5 4 V10 L7 13 L1.5 10 V4 Z M1.5 4 L7 7 L12.5 4 M7 7 V13" fill="none" stroke="#9eacb8" stroke-width="1.1"/></svg>
<div class="t" style="left:1271px;top:147px;font-size:12.6px;color:#9eaab4">Canvas</div>
<svg style="left:1243px;top:165px" width="7" height="9"><path d="M0 0 V9 L7 4.5 Z" fill="#34475a"/></svg>
<svg style="left:1254px;top:162px" width="14" height="14" viewBox="0 0 14 14"><path d="M7 1 L12.5 4 V10 L7 13 L1.5 10 V4 Z M1.5 4 L7 7 L12.5 4 M7 7 V13" fill="none" stroke="#9eacb8" stroke-width="1.1"/></svg>
<div class="t" style="left:1271px;top:163px;font-size:12.6px;color:#9eaab4">Grid</div>
<svg style="left:1243px;top:181px" width="7" height="9"><path d="M0 0 V9 L7 4.5 Z" fill="#34475a"/></svg>
<svg style="left:1254px;top:178px" width="14" height="14" viewBox="0 0 14 14"><path d="M7 1 L12.5 4 V10 L7 13 L1.5 10 V4 Z M1.5 4 L7 7 L12.5 4 M7 7 V13" fill="none" stroke="#9eacb8" stroke-width="1.1"/></svg>
<div class="t" style="left:1271px;top:179px;font-size:12.6px;color:#9eaab4">Map Objects</div>
<svg style="left:1254px;top:194px" width="14" height="14" viewBox="0 0 14 14"><path d="M7 1 L12.5 4 V10 L7 13 L1.5 10 V4 Z M1.5 4 L7 7 L12.5 4 M7 7 V13" fill="none" stroke="#9eacb8" stroke-width="1.1"/></svg>
<div class="t" style="left:1271px;top:195px;font-size:12.6px;color:#9eaab4">InGameUIManger</div>
<svg style="left:1242px;top:214px" width="9" height="7"><path d="M0 0 H9 L4.5 7 Z" fill="#34475a"/></svg>
<svg style="left:1254px;top:210px" width="14" height="14" viewBox="0 0 14 14"><path d="M7 1 L12.5 4 V10 L7 13 L1.5 10 V4 Z M1.5 4 L7 7 L12.5 4 M7 7 V13" fill="none" stroke="#9eacb8" stroke-width="1.1"/></svg>
<div class="t" style="left:1271px;top:211px;font-size:12.6px;color:#9eaab4">Map Things</div>
<div class="a" style="left:1225px;top:225px;width:2px;height:16px;background:#2a5aa8"></div>
<svg style="left:1257px;top:229px" width="7" height="9"><path d="M0 0 V9 L7 4.5 Z" fill="#34475a"/></svg>
<svg style="left:1267px;top:225px" width="16" height="16" viewBox="0 0 14 14"><path d="M7 1 L12.5 4 V10 L7 13 L1.5 10 V4 Z" fill="#5cb4f0"/><path d="M1.5 4 L7 7 L12.5 4 M7 7 V13" fill="none" stroke="#1b2a38" stroke-width="1.1"/></svg>
<svg style="left:1454px;top:228px" width="6" height="10"><path d="M0.5 0.5 L5 5 L0.5 9.5" fill="none" stroke="#6a8090" stroke-width="1.2"/></svg>
<div class="t" style="left:1285px;top:227px;font-size:12.6px;color:#6c9ed4">AreaTransitionToMap</div>
<div class="a" style="left:1225px;top:241px;width:2px;height:16px;background:#2a5aa8"></div>
<svg style="left:1257px;top:245px" width="7" height="9"><path d="M0 0 V9 L7 4.5 Z" fill="#34475a"/></svg>
<svg style="left:1267px;top:241px" width="16" height="16" viewBox="0 0 14 14"><path d="M7 1 L12.5 4 V10 L7 13 L1.5 10 V4 Z" fill="#5cb4f0"/><path d="M1.5 4 L7 7 L12.5 4 M7 7 V13" fill="none" stroke="#1b2a38" stroke-width="1.1"/></svg>
<svg style="left:1454px;top:244px" width="6" height="10"><path d="M0.5 0.5 L5 5 L0.5 9.5" fill="none" stroke="#6a8090" stroke-width="1.2"/></svg>
<div class="t" style="left:1285px;top:243px;font-size:12.6px;color:#6c9ed4">AreaTransitionToBase</div>
<div class="a" style="left:1225px;top:257px;width:2px;height:16px;background:#2a5aa8"></div>
<svg style="left:1257px;top:261px" width="7" height="9"><path d="M0 0 V9 L7 4.5 Z" fill="#34475a"/></svg>
<svg style="left:1267px;top:257px" width="16" height="16" viewBox="0 0 14 14"><path d="M7 1 L12.5 4 V10 L7 13 L1.5 10 V4 Z" fill="#5cb4f0"/><path d="M1.5 4 L7 7 L12.5 4 M7 7 V13" fill="none" stroke="#1b2a38" stroke-width="1.1"/></svg>
<svg style="left:1454px;top:260px" width="6" height="10"><path d="M0.5 0.5 L5 5 L0.5 9.5" fill="none" stroke="#6a8090" stroke-width="1.2"/></svg>
<div class="t" style="left:1285px;top:259px;font-size:12.6px;color:#6c9ed4">MapBoundary(Base)</div>
<div class="a" style="left:1225px;top:273px;width:2px;height:16px;background:#2a5aa8"></div>
<svg style="left:1257px;top:277px" width="7" height="9"><path d="M0 0 V9 L7 4.5 Z" fill="#34475a"/></svg>
<svg style="left:1267px;top:273px" width="16" height="16" viewBox="0 0 14 14"><path d="M7 1 L12.5 4 V10 L7 13 L1.5 10 V4 Z" fill="#5cb4f0"/><path d="M1.5 4 L7 7 L12.5 4 M7 7 V13" fill="none" stroke="#1b2a38" stroke-width="1.1"/></svg>
<svg style="left:1454px;top:276px" width="6" height="10"><path d="M0.5 0.5 L5 5 L0.5 9.5" fill="none" stroke="#6a8090" stroke-width="1.2"/></svg>
<div class="t" style="left:1285px;top:275px;font-size:12.6px;color:#6c9ed4">MapBoundary(1)</div>
<div class="a" style="left:1225px;top:288px;width:2px;height:16px;background:#2a5aa8"></div>
<svg style="left:1243px;top:292px" width="7" height="9"><path d="M0 0 V9 L7 4.5 Z" fill="#34475a"/></svg>
<svg style="left:1253px;top:288px" width="16" height="16" viewBox="0 0 14 14"><path d="M7 1 L12.5 4 V10 L7 13 L1.5 10 V4 Z" fill="#5cb4f0"/><path d="M1.5 4 L7 7 L12.5 4 M7 7 V13" fill="none" stroke="#1b2a38" stroke-width="1.1"/></svg>
<svg style="left:1454px;top:291px" width="6" height="10"><path d="M0.5 0.5 L5 5 L0.5 9.5" fill="none" stroke="#6a8090" stroke-width="1.2"/></svg>
<div class="t" style="left:1271px;top:290px;font-size:12.6px;color:#6c9ed4">Player</div>
<div class="a" style="left:1225px;top:305px;width:2px;height:16px;background:#2a5aa8"></div>
<svg style="left:1253px;top:305px" width="16" height="16" viewBox="0 0 14 14"><path d="M7 1 L12.5 4 V10 L7 13 L1.5 10 V4 Z" fill="#5cb4f0"/><path d="M1.5 4 L7 7 L12.5 4 M7 7 V13" fill="none" stroke="#1b2a38" stroke-width="1.1"/></svg>
<svg style="left:1454px;top:308px" width="6" height="10"><path d="M0.5 0.5 L5 5 L0.5 9.5" fill="none" stroke="#6a8090" stroke-width="1.2"/></svg>
<div class="t" style="left:1271px;top:307px;font-size:12.6px;color:#6c9ed4">PlayerStats</div>
<div class="a" style="left:1225px;top:321px;width:2px;height:16px;background:#2a5aa8"></div>
<svg style="left:1243px;top:325px" width="7" height="9"><path d="M0 0 V9 L7 4.5 Z" fill="#34475a"/></svg>
<svg style="left:1253px;top:321px" width="16" height="16" viewBox="0 0 14 14"><path d="M7 1 L12.5 4 V10 L7 13 L1.5 10 V4 Z" fill="#5cb4f0"/><path d="M1.5 4 L7 7 L12.5 4 M7 7 V13" fill="none" stroke="#1b2a38" stroke-width="1.1"/></svg>
<svg style="left:1454px;top:324px" width="6" height="10"><path d="M0.5 0.5 L5 5 L0.5 9.5" fill="none" stroke="#6a8090" stroke-width="1.2"/></svg>
<div class="t" style="left:1271px;top:323px;font-size:12.6px;color:#6c9ed4">Player Canvas</div>
<svg style="left:1254px;top:338px" width="14" height="14" viewBox="0 0 14 14"><path d="M7 1 L12.5 4 V10 L7 13 L1.5 10 V4 Z M1.5 4 L7 7 L12.5 4 M7 7 V13" fill="none" stroke="#9eacb8" stroke-width="1.1"/></svg>
<div class="t" style="left:1271px;top:339px;font-size:12.6px;color:#9eaab4">EventSystem</div>
<div class="a" style="left:1225px;top:353px;width:2px;height:16px;background:#2a5aa8"></div>
<svg style="left:1243px;top:357px" width="7" height="9"><path d="M0 0 V9 L7 4.5 Z" fill="#34475a"/></svg>
<svg style="left:1253px;top:353px" width="16" height="16" viewBox="0 0 14 14"><path d="M7 1 L12.5 4 V10 L7 13 L1.5 10 V4 Z" fill="#5cb4f0"/><path d="M1.5 4 L7 7 L12.5 4 M7 7 V13" fill="none" stroke="#1b2a38" stroke-width="1.1"/></svg>
<svg style="left:1454px;top:356px" width="6" height="10"><path d="M0.5 0.5 L5 5 L0.5 9.5" fill="none" stroke="#6a8090" stroke-width="1.2"/></svg>
<div class="t" style="left:1271px;top:355px;font-size:12.6px;color:#6c9ed4">Player Headup UI Canvas</div>
<svg style="left:1243px;top:373px" width="7" height="9"><path d="M0 0 V9 L7 4.5 Z" fill="#34475a"/></svg>
<svg style="left:1254px;top:370px" width="14" height="14" viewBox="0 0 14 14"><path d="M7 1 L12.5 4 V10 L7 13 L1.5 10 V4 Z M1.5 4 L7 7 L12.5 4 M7 7 V13" fill="none" stroke="#9eacb8" stroke-width="1.1"/></svg>
<div class="t" style="left:1271px;top:371px;font-size:12.6px;color:#9eaab4">Objects</div>
<div class="a" style="left:1225px;top:386px;width:2px;height:16px;background:#2a5aa8"></div>
<svg style="left:1243px;top:390px" width="7" height="9"><path d="M0 0 V9 L7 4.5 Z" fill="#34475a"/></svg>
<svg style="left:1253px;top:386px" width="16" height="16" viewBox="0 0 14 14"><path d="M7 1 L12.5 4 V10 L7 13 L1.5 10 V4 Z" fill="#5cb4f0"/><path d="M1.5 4 L7 7 L12.5 4 M7 7 V13" fill="none" stroke="#1b2a38" stroke-width="1.1"/></svg>
<svg style="left:1454px;top:389px" width="6" height="10"><path d="M0.5 0.5 L5 5 L0.5 9.5" fill="none" stroke="#6a8090" stroke-width="1.2"/></svg>
<div class="t" style="left:1271px;top:388px;font-size:12.6px;color:#6c9ed4">Inven&amp;apllication UICanvas</div>
<div class="a" style="left:1225px;top:402px;width:2px;height:16px;background:#2a5aa8"></div>
<svg style="left:1243px;top:406px" width="7" height="9"><path d="M0 0 V9 L7 4.5 Z" fill="#34475a"/></svg>
<svg style="left:1253px;top:402px" width="16" height="16" viewBox="0 0 14 14"><path d="M7 1 L12.5 4 V10 L7 13 L1.5 10 V4 Z" fill="#5cb4f0"/><path d="M1.5 4 L7 7 L12.5 4 M7 7 V13" fill="none" stroke="#1b2a38" stroke-width="1.1"/></svg>
<svg style="left:1454px;top:405px" width="6" height="10"><path d="M0.5 0.5 L5 5 L0.5 9.5" fill="none" stroke="#6a8090" stroke-width="1.2"/></svg>
<div class="t" style="left:1271px;top:404px;font-size:12.6px;color:#6c9ed4">MouseCanvas</div>
<svg style="left:1254px;top:419px" width="14" height="14" viewBox="0 0 14 14"><path d="M7 1 L12.5 4 V10 L7 13 L1.5 10 V4 Z M1.5 4 L7 7 L12.5 4 M7 7 V13" fill="none" stroke="#9eacb8" stroke-width="1.1"/></svg>
<div class="t" style="left:1271px;top:420px;font-size:12.6px;color:#9eaab4">Inv Manager</div>
<!-- Inspector -->
<div class="a" style="left:1467px;top:93px;width:453px;height:917px;background:#1b303a"></div>
<div class="a" style="left:1467px;top:93px;width:441px;height:57px;background:#1a2e38"></div>
<svg style="left:1479px;top:102px" width="24" height="28" viewBox="0 0 24 28"><path d="M0 2 Q0 0 2 0 H17 L24 7 V26 Q24 28 22 28 H2 Q0 28 0 26 Z" fill="#5ea4ea"/><path d="M17 0 V7 H24" fill="#5a9ac8"/><path d="M8.5 7 L6.5 22 M15.5 7 L13.5 22 M4.5 11.5 H19.5 M3.8 17.5 H18.8" stroke="#1d5a2a" stroke-width="2.6"/></svg>
<svg style="left:1502px;top:129px" width="8" height="5"><path d="M0 0 H8 L4 5 Z" fill="#8fb4d4"/></svg>
<div class="t" style="left:1513px;top:98px;font-size:13.8px;color:#8594a2">Box Item Random System (Mono Script) Import Settings</div>
<svg style="left:1878px;top:100px" width="11" height="11"><circle cx="5.5" cy="5.5" r="5.5" fill="#6a9cc8"/><text x="2.8" y="9" font-family="Liberation Sans" font-size="9" font-weight="bold" fill="#1a2a38">?</text></svg>
<svg style="left:1897px;top:99px" width="4" height="13"><circle cx="2" cy="2" r="1.2" fill="#8d9cb0"/><circle cx="2" cy="6.5" r="1.2" fill="#8d9cb0"/><circle cx="2" cy="11" r="1.2" fill="#8d9cb0"/></svg>
<div class="btn" style="left:1746px;top:121px;width:41px;height:16px;background:#26394a"></div>
<div class="t" style="left:1752px;top:123px;font-size:12.5px;color:#b0bec8">Open</div>
<div class="btn" style="left:1792px;top:121px;width:110px;height:16px;background:#26394a"></div>
<div class="t" style="left:1798px;top:123px;font-size:12.3px;color:#b0bec8">Execution Order...</div>
<div class="a" style="left:1467px;top:150px;width:441px;height:1px;background:#0f1a24"></div>
<div class="t" style="left:1486px;top:158px;font-size:12.5px;color:#919fab">Data</div>
<div class="a" style="left:1651px;top:155px;width:251px;height:17px;background:#0f1b27;border-radius:2px"></div>
<div class="t" style="left:1654px;top:158px;font-size:12.2px;color:#b6c2cc">None (Box System)</div>
<svg style="left:1887px;top:158px" width="11" height="11"><circle cx="5.5" cy="5.5" r="4.6" fill="none" stroke="#8aa0b4" stroke-width="1.1"/><circle cx="5.5" cy="5.5" r="1.6" fill="#8aa0b4"/></svg>
<div class="a" style="left:1486px;top:175px;width:416px;height:37px;background:#1f3440;border:1px solid #15222e;border-radius:3px"></div>
<svg style="left:1491px;top:179px" width="27" height="29" viewBox="0 0 27 29"><circle cx="12.8" cy="12.5" r="12.5" fill="#72b2f0"/><path d="M17 22 L25 28 L21 18 Z" fill="#72b2f0"/><rect x="11" y="4" width="3.6" height="11" rx="1.2" fill="#102030"/><circle cx="12.8" cy="19.5" r="2.2" fill="#102030"/></svg>
<div class="t" style="left:1522px;top:188px;font-size:10.8px;color:#7e90a0">Default references will only be applied in edit mode.</div>
<div class="a" style="left:1467px;top:240px;width:441px;height:1px;background:#0f1a24"></div>
<div class="t" style="left:1471px;top:248px;font-size:12.5px;color:#a4b2bc">Imported Object</div>
<div class="a" style="left:1467px;top:267px;width:441px;height:1px;background:#0f1a24"></div>
<div class="a" style="left:1467px;top:268px;width:441px;height:56px;background:#1a2e38"></div>
<svg style="left:1477px;top:276px" width="24" height="28" viewBox="0 0 24 28"><path d="M0 2 Q0 0 2 0 H17 L24 7 V26 Q24 28 22 28 H2 Q0 28 0 26 Z" fill="#5ea4ea"/><path d="M17 0 V7 H24" fill="#5a9ac8"/><path d="M8.5 7 L6.5 22 M15.5 7 L13.5 22 M4.5 11.5 H19.5 M3.8 17.5 H18.8" stroke="#1d5a2a" stroke-width="2.6"/></svg>
<div class="t" style="left:1513px;top:274px;font-size:13.8px;color:#8594a2">Box Item Random System (Mono Script)</div>
<svg style="left:1878px;top:276px" width="11" height="11"><circle cx="5.5" cy="5.5" r="5.5" fill="#6a9cc8"/><text x="2.8" y="9" font-family="Liberation Sans" font-size="9" font-weight="bold" fill="#1a2a38">?</text></svg>
<svg style="left:1897px;top:275px" width="4" height="13"><circle cx="2" cy="2" r="1.2" fill="#8d9cb0"/><circle cx="2" cy="6.5" r="1.2" fill="#8d9cb0"/><circle cx="2" cy="11" r="1.2" fill="#8d9cb0"/></svg>
<div class="a" style="left:1467px;top:324px;width:441px;height:1px;background:#0f1a24"></div>
<div class="t" style="left:1486px;top:330px;font-size:12.3px;color:#a4b2bc;font-weight:bold">Assembly Information</div>
<div class="t" style="left:1486px;top:349px;font-size:12.5px;color:#919fab">Filename</div>
<div class="t" style="left:1652px;top:349px;font-size:12.5px;color:#919fab">Assembly-CSharp.dll</div>
<div class="a" style="left:1467px;top:368px;width:441px;height:1px;background:#15222e"></div>
<div class="t" style="left:1470px;top:373px;font-size:12.5px;color:#919fab">using UnityEngine;</div>
<div class="t" style="left:1470px;top:403px;font-size:12.5px;color:#919fab">enum BoxTier { Tier1, Tier2, Tier3 }</div>
<div class="t" style="left:1470px;top:433px;font-size:12.5px;color:#919fab">public class BoxItemRandomSystem : MonoBehaviour</div>
<div class="t" style="left:1470px;top:448px;font-size:12.5px;color:#919fab">{</div>
<div class="t" style="left:1483px;top:463px;font-size:12.5px;color:#919fab">[SerializeField] BoxTier _tier;</div>
<div class="t" style="left:1483px;top:478px;font-size:12.5px;color:#919fab">[SerializeField] BoxSystem _data;</div>
<div class="t" style="left:1483px;top:508px;font-size:12.5px;color:#919fab">[Header("Item - Normal")]</div>
<div class="t" style="left:1483px;top:523px;font-size:12.5px;color:#919fab">[SerializeField] ItemSO[] _itemA_Items1;</div>
<div class="t" style="left:1483px;top:553px;font-size:12.5px;color:#919fab">[Header("Item - Rare")]</div>
<div class="t" style="left:1483px;top:568px;font-size:12.5px;color:#919fab">[SerializeField] ItemSO[] _itemA_Items2;</div>
<div class="t" style="left:1483px;top:598px;font-size:12.5px;color:#919fab">[Header("Item - Unique")]</div>
<div class="t" style="left:1483px;top:613px;font-size:12.5px;color:#919fab">[SerializeField] ItemSO[] _itemA_Items3;</div>
<div class="t" style="left:1483px;top:643px;font-size:12.5px;color:#919fab">[Header("Item - Legendary")]</div>
<div class="t" style="left:1483px;top:658px;font-size:12.5px;color:#919fab">[SerializeField] ItemSO[] _itemA_Items4;</div>
<div class="t" style="left:1483px;top:688px;font-size:12.5px;color:#919fab">[Header("Journal - List")]</div>
<div class="t" style="left:1483px;top:703px;font-size:12.5px;color:#919fab">[SerializeField] ItemSO[] _itemB_Journal;</div>
<div class="t" style="left:1483px;top:733px;font-size:12.5px;color:#919fab">[Header("Food")]</div>
<div class="t" style="left:1483px;top:748px;font-size:12.5px;color:#919fab">[SerializeField] ItemSO[] _itemC_Food;</div>
<div class="t" style="left:1483px;top:778px;font-size:12.5px;color:#919fab">[Header("Collectible - List")]</div>
<div class="t" style="left:1483px;top:793px;font-size:12.5px;color:#919fab">[SerializeField] ItemSO[] _itemD_Collection;</div>
<div class="t" style="left:1483px;top:823px;font-size:12.5px;color:#919fab">private WeightedRandom&lt;ItemSO&gt; _weightedRandomA = new</div>
<div class="t" style="left:1470px;top:838px;font-size:12.5px;color:#919fab">WeightedRandom&lt;ItemSO&gt;();</div>
<div class="t" style="left:1483px;top:853px;font-size:12.5px;color:#919fab">// private WeightedRandom&lt;ItemSO&gt; _weightedRandomB = new</div>
<div class="t" style="left:1470px;top:868px;font-size:12.5px;color:#919fab">WeightedRandom&lt;ItemSO&gt;();</div>
<div class="t" style="left:1483px;top:883px;font-size:12.5px;color:#919fab">// private WeightedRandom&lt;ItemSO&gt; _weightedRandomC = new</div>
<div class="t" style="left:1470px;top:898px;font-size:12.5px;color:#919fab">WeightedRandom&lt;ItemSO&gt;();</div>
<div class="t" style="left:1483px;top:913px;font-size:12.5px;color:#919fab">private WeightedRandom&lt;ItemSO&gt; _weightedRandomD = new</div>
<div class="t" style="left:1470px;top:928px;font-size:12.5px;color:#919fab">WeightedRandom&lt;ItemSO&gt;();</div>
<div class="t" style="left:1483px;top:973px;font-size:12.5px;color:#919fab">private void Awake()</div>
<div class="a" style="left:1908px;top:93px;width:12px;height:897px;background:#172a34"></div>
<svg style="left:1910px;top:97px" width="8" height="5"><path d="M0 5 H8 L4 0 Z" fill="#8ab8e0"/></svg>
<div class="a" style="left:1909px;top:110px;width:9px;height:299px;background:#2c4256;border-radius:4px"></div>
<svg style="left:1909px;top:976px" width="9" height="6"><path d="M0 0 H9 L4.5 6 Z" fill="#7ab0e0"/></svg>
<div class="a" style="left:1467px;top:989px;width:453px;height:21px;background:#1a2e38;border-top:1px solid #0f1a24"></div>
<div class="t" style="left:1474px;top:994px;font-size:12px;color:#919fab;font-weight:bold">Asset Labels</div>
<!-- bottom tab strip -->
<div class="a" style="left:0;top:625px;width:1465px;height:22px;background:#101e27"></div>
<div class="a" style="left:1px;top:627px;width:84px;height:20px;background:#1a2c37;border-radius:3px 3px 0 0"></div>
<svg style="left:8px;top:631px" width="11" height="12" viewBox="0 0 11 12"><rect x="0.6" y="0.6" width="9.8" height="10.8" fill="none" stroke="#8ea8be" stroke-width="1.1"/><path d="M2.5 3.5 H8.5 M2.5 6 H8.5 M2.5 8.5 H8.5" stroke="#8ea8be" stroke-width="1"/></svg>
<div class="t" style="left:23px;top:631px;font-size:12.5px;color:#a9b8c4">Console</div>
<svg style="left:95px;top:631px" width="12" height="12"><circle cx="6" cy="6" r="6" fill="#6a92b0"/><path d="M6 6 V0.5 A5.5 5.5 0 0 1 11.5 6 Z" fill="#0f1c28"/></svg>
<div class="t" style="left:111px;top:631px;font-size:12.5px;color:#a0b0bd">Animation</div>
<svg style="left:764px;top:630px" width="4" height="13"><circle cx="2" cy="2" r="1.2" fill="#8d9cb0"/><circle cx="2" cy="6.5" r="1.2" fill="#8d9cb0"/><circle cx="2" cy="11" r="1.2" fill="#8d9cb0"/></svg>
<div class="a" style="left:0;top:647px;width:779px;height:363px;background:#162c33"></div>
<div class="a" style="left:0;top:647px;width:779px;height:20px;background:#1a2c37"></div>
<div class="t" style="left:4px;top:651px;font-size:12.5px;color:#98aabb">Clear</div>
<div class="dd" style="left:44px;top:655px"></div>
<div class="a" style="left:56px;top:647px;width:1px;height:20px;background:#0e1a26"></div>
<div class="t" style="left:60px;top:651px;font-size:12.5px;color:#98aabb">Collapse</div>
<div class="a" style="left:114px;top:647px;width:1px;height:20px;background:#0e1a26"></div>
<div class="t" style="left:120px;top:651px;font-size:12.5px;color:#98aabb">Error Pause</div>
<div class="a" style="left:188px;top:647px;width:1px;height:20px;background:#0e1a26"></div>
<div class="t" style="left:193px;top:651px;font-size:12.5px;color:#98aabb">Editor</div>
<div class="dd" style="left:228px;top:655px"></div>
<div class="a" style="left:240px;top:647px;width:1px;height:20px;background:#0e1a26"></div>
<div class="a" style="left:376px;top:649px;width:301px;height:16px;background:#0f1b27;border-radius:3px"></div>
<svg style="left:380px;top:653px" width="8" height="8"><circle cx="3" cy="3" r="2.3" fill="none" stroke="#8aa0b4" stroke-width="1.1"/><path d="M4.8 4.8 L7.5 7.5" stroke="#8aa0b4" stroke-width="1.2"/></svg>
<div class="a" style="left:680px;top:647px;width:31px;height:20px;background:#22364a"></div>
<svg style="left:684px;top:650px" width="13" height="13"><circle cx="6.5" cy="6.5" r="6" fill="#4a6072"/><rect x="5.6" y="3" width="1.8" height="5" fill="#22364a"/><rect x="5.6" y="9" width="1.8" height="1.8" fill="#22364a"/></svg>
<div class="t" style="left:699px;top:651px;font-size:12.5px;color:#6f8496">0</div>
<div class="a" style="left:714px;top:647px;width:31px;height:20px;background:#22364a"></div>
<svg style="left:717px;top:649px" width="15" height="14" viewBox="0 0 15 14"><path d="M7.5 0.5 L14.5 13.5 H0.5 Z" fill="#d8cc30"/><rect x="6.7" y="4.5" width="1.6" height="5" fill="#1a2a38"/><rect x="6.7" y="10.5" width="1.6" height="1.6" fill="#1a2a38"/></svg>
<div class="t" style="left:733px;top:651px;font-size:12.5px;color:#98aabb">1</div>
<div class="a" style="left:747px;top:647px;width:31px;height:20px;background:#22364a"></div>
<svg style="left:750px;top:650px" width="13" height="13"><circle cx="6.5" cy="6.5" r="6" fill="#9cc8ec"/><rect x="5.6" y="3" width="1.8" height="5" fill="#1a2a38"/><rect x="5.6" y="9" width="1.8" height="1.8" fill="#1a2a38"/></svg>
<div class="t" style="left:765px;top:651px;font-size:12.5px;color:#98aabb">0</div>
<div class="a" style="left:0;top:668px;width:779px;height:37px;background:#144683"></div>
<svg style="left:10px;top:672px" width="27" height="28" viewBox="0 0 27 28"><path d="M13.5 1 L26.5 27 H0.5 Z" fill="#d4d030" stroke="#d4d030" stroke-linejoin="round" stroke-width="1.5"/><rect x="11.8" y="9" width="3.4" height="10" rx="1" fill="#1b3a6a"/><circle cx="13.5" cy="22.5" r="1.9" fill="#1b3a6a"/></svg>
<div class="t" style="left:40px;top:671px;font-size:12.65px;color:#a8c4e0">[21:36:22] Assets\LHW\Scripts\Crafting\UI\CraftingController.cs(83,9): warning CS0162: Unreachable code detected</div>
<div class="a" style="left:779px;top:625px;width:3px;height:385px;background:#0d1824"></div>
<div class="a" style="left:784px;top:627px;width:77px;height:20px;background:#1a2c37;border-radius:3px 3px 0 0"></div>
<svg style="left:789px;top:631px" width="13" height="11" viewBox="0 0 13 11"><path d="M0 1 Q0 0 1 0 H5 L6.5 1.5 H12 Q13 1.5 13 2.5 V10 Q13 11 12 11 H1 Q0 11 0 10 Z" fill="#6a92b0"/></svg>
<div class="t" style="left:805px;top:631px;font-size:12.5px;color:#a9b8c4">Project</div>
<svg style="left:1431px;top:630px" width="10" height="12" viewBox="0 0 10 12"><rect x="0.7" y="5.7" width="8.6" height="5.6" fill="none" stroke="#9fb0c0" stroke-width="1.2"/><path d="M2.5 5.5 V3.5 Q2.5 0.8 5 0.8 Q7.5 0.8 7.5 3" fill="none" stroke="#9fb0c0" stroke-width="1.2"/></svg>
<svg style="left:1450px;top:630px" width="4" height="13"><circle cx="2" cy="2" r="1.2" fill="#8d9cb0"/><circle cx="2" cy="6.5" r="1.2" fill="#8d9cb0"/><circle cx="2" cy="11" r="1.2" fill="#8d9cb0"/></svg>
<div class="a" style="left:782px;top:647px;width:683px;height:363px;background:#16262c"></div>
<div class="a" style="left:782px;top:647px;width:683px;height:20px;background:#1a2c37"></div>
<svg style="left:788px;top:650px" width="12" height="12"><path d="M6 0 V12 M0 6 H12" stroke="#a8c0d4" stroke-width="1.8"/></svg>
<div class="dd" style="left:804px;top:655px"></div>
<div class="a" style="left:999px;top:649px;width:299px;height:16px;background:#0f1b27;border-radius:3px"></div>
<svg style="left:1003px;top:653px" width="8" height="8"><circle cx="3" cy="3" r="2.3" fill="none" stroke="#8aa0b4" stroke-width="1.1"/><path d="M4.8 4.8 L7.5 7.5" stroke="#8aa0b4" stroke-width="1.2"/></svg>
<svg style="left:1301px;top:650px" width="13" height="13" viewBox="0 0 12 12"><rect x="0.6" y="5.6" width="5.8" height="5.8" fill="none" stroke="#8aa4bc" stroke-width="1.1"/><rect x="3.6" y="0.6" width="7.8" height="7.8" fill="none" stroke="#8aa4bc" stroke-width="1.1"/><path d="M5 7 L9 3 M6.5 3 H9 V5.5" fill="none" stroke="#8aa4bc" stroke-width="1"/></svg>
<svg style="left:1325px;top:649px" width="14" height="14" viewBox="0 0 14 14"><circle cx="4" cy="10" r="3.5" fill="#6a92b0"/><rect x="7" y="7" width="6" height="6" fill="#6a92b0"/><path d="M6 0.5 L10 6 H2 Z" fill="#6a92b0"/></svg>
<svg style="left:1352px;top:650px" width="13" height="13" viewBox="0 0 13 13"><path d="M7 0.5 H12.5 V6 L6 12.5 L0.5 7 Z" fill="#6a92b0"/><circle cx="10" cy="3" r="1.2" fill="#192a3a"/></svg>
<svg style="left:1375px;top:649px" width="14" height="14"><circle cx="7" cy="7" r="6.5" fill="#b8d8f0"/><rect x="6.1" y="3" width="1.8" height="5.5" fill="#192a3a"/><rect x="6.1" y="9.5" width="1.8" height="1.8" fill="#192a3a"/></svg>
<svg style="left:1403px;top:650px" width="12" height="12" viewBox="0 0 12 12"><path d="M6 0.5 L7.6 4.2 L11.5 4.4 L8.5 7 L9.5 11 L6 8.8 L2.5 11 L3.5 7 L0.5 4.4 L4.4 4.2 Z" fill="#5f7c94"/></svg>
<svg style="left:1427px;top:651px" width="14" height="9" viewBox="0 0 14 9"><path d="M0.5 4.5 Q7 -2.5 13.5 4.5 Q7 11.5 0.5 4.5 Z" fill="#4e6478"/><circle cx="7" cy="4.5" r="2" fill="#192a3a"/></svg>
<div class="t" style="left:1444px;top:651px;font-size:12.5px;color:#8d9eac">33</div>
<div class="a" style="left:782px;top:667px;width:188px;height:343px;overflow:hidden;background:#162c33">
<div class="a" style="left:0;top:327px;width:174px;height:16px;background:#24384a"></div>
<svg style="left:19px;top:-4px" width="7" height="9"><path d="M0 0 V9 L7 4.5 Z" fill="#34475a"/></svg>
<svg style="left:30px;top:-5px" width="14" height="11" viewBox="0 0 14 11"><path d="M0 1 Q0 0 1 0 H5 L6.5 1.5 H13 Q14 1.5 14 2.5 V10 Q14 11 13 11 H1 Q0 11 0 10 Z" fill="#6a92b0"/></svg>
<div class="t" style="left:46px;top:-6px;font-size:12.6px;color:#919fab">05.Prefabs</div>
<svg style="left:18px;top:12px" width="9" height="7"><path d="M0 0 H9 L4.5 7 Z" fill="#34475a"/></svg>
<svg style="left:30px;top:10px" width="15" height="11" viewBox="0 0 15 11"><path d="M0 1 Q0 0 1 0 H5 L6.5 1.5 H11 Q12 1.5 12 2.5 V4 H3 L0 10 Z" fill="#6a92b0"/><path d="M3.2 4.5 H15 L12 11 H0 Z" fill="#6a92b0"/></svg>
<div class="t" style="left:46px;top:10px;font-size:12.6px;color:#919fab">CMS</div>
<svg style="left:34px;top:28px" width="7" height="9"><path d="M0 0 V9 L7 4.5 Z" fill="#34475a"/></svg>
<svg style="left:45px;top:27px" width="14" height="11" viewBox="0 0 14 11"><path d="M0 1 Q0 0 1 0 H5 L6.5 1.5 H13 Q14 1.5 14 2.5 V10 Q14 11 13 11 H1 Q0 11 0 10 Z" fill="#6a92b0"/></svg>
<div class="t" style="left:61px;top:26px;font-size:12.6px;color:#919fab">Animation</div>
<svg style="left:45px;top:43px" width="14" height="11" viewBox="0 0 14 11"><path d="M0 1 Q0 0 1 0 H5 L6.5 1.5 H13 Q14 1.5 14 2.5 V10 Q14 11 13 11 H1 Q0 11 0 10 Z" fill="#6a92b0"/></svg>
<div class="t" style="left:61px;top:42px;font-size:12.6px;color:#919fab">Prefabs</div>
<svg style="left:33px;top:61px" width="9" height="7"><path d="M0 0 H9 L4.5 7 Z" fill="#34475a"/></svg>
<svg style="left:45px;top:59px" width="15" height="11" viewBox="0 0 15 11"><path d="M0 1 Q0 0 1 0 H5 L6.5 1.5 H11 Q12 1.5 12 2.5 V4 H3 L0 10 Z" fill="#6a92b0"/><path d="M3.2 4.5 H15 L12 11 H0 Z" fill="#6a92b0"/></svg>
<div class="t" style="left:61px;top:58px;font-size:12.6px;color:#919fab">Script</div>
<svg style="left:59px;top:75px" width="14" height="11" viewBox="0 0 14 11"><path d="M0 1 Q0 0 1 0 H5 L6.5 1.5 H13 Q14 1.5 14 2.5 V10 Q14 11 13 11 H1 Q0 11 0 10 Z" fill="#6a92b0"/></svg>
<div class="t" style="left:75px;top:74px;font-size:12.6px;color:#919fab">Monster</div>
<svg style="left:59px;top:91px" width="14" height="11" viewBox="0 0 14 11"><path d="M0 1 Q0 0 1 0 H5 L6.5 1.5 H13 Q14 1.5 14 2.5 V10 Q14 11 13 11 H1 Q0 11 0 10 Z" fill="#6a92b0"/></svg>
<div class="t" style="left:75px;top:90px;font-size:12.6px;color:#919fab">Player</div>
<svg style="left:18px;top:109px" width="9" height="7"><path d="M0 0 H9 L4.5 7 Z" fill="#34475a"/></svg>
<svg style="left:30px;top:107px" width="15" height="11" viewBox="0 0 15 11"><path d="M0 1 Q0 0 1 0 H5 L6.5 1.5 H11 Q12 1.5 12 2.5 V4 H3 L0 10 Z" fill="#6a92b0"/><path d="M3.2 4.5 H15 L12 11 H0 Z" fill="#6a92b0"/></svg>
<div class="t" style="left:46px;top:106px;font-size:12.6px;color:#919fab">LHW</div>
<svg style="left:33px;top:125px" width="9" height="7"><path d="M0 0 H9 L4.5 7 Z" fill="#34475a"/></svg>
<svg style="left:45px;top:123px" width="15" height="11" viewBox="0 0 15 11"><path d="M0 1 Q0 0 1 0 H5 L6.5 1.5 H11 Q12 1.5 12 2.5 V4 H3 L0 10 Z" fill="#6a92b0"/><path d="M3.2 4.5 H15 L12 11 H0 Z" fill="#6a92b0"/></svg>
<div class="t" style="left:61px;top:122px;font-size:12.6px;color:#919fab">ItemData</div>
<svg style="left:47px;top:141px" width="9" height="7"><path d="M0 0 H9 L4.5 7 Z" fill="#34475a"/></svg>
<svg style="left:59px;top:139px" width="15" height="11" viewBox="0 0 15 11"><path d="M0 1 Q0 0 1 0 H5 L6.5 1.5 H11 Q12 1.5 12 2.5 V4 H3 L0 10 Z" fill="#6a92b0"/><path d="M3.2 4.5 H15 L12 11 H0 Z" fill="#6a92b0"/></svg>
<div class="t" style="left:75px;top:138px;font-size:12.6px;color:#919fab">Test</div>
<svg style="left:73px;top:155px" width="14" height="11" viewBox="0 0 14 11"><path d="M0 1 Q0 0 1 0 H5 L6.5 1.5 H13 Q14 1.5 14 2.5 V10 Q14 11 13 11 H1 Q0 11 0 10 Z" fill="#6a92b0"/></svg>
<div class="t" style="left:89px;top:154px;font-size:12.6px;color:#919fab">TestRecipe</div>
<svg style="left:33px;top:173px" width="9" height="7"><path d="M0 0 H9 L4.5 7 Z" fill="#34475a"/></svg>
<svg style="left:45px;top:171px" width="15" height="11" viewBox="0 0 15 11"><path d="M0 1 Q0 0 1 0 H5 L6.5 1.5 H11 Q12 1.5 12 2.5 V4 H3 L0 10 Z" fill="#6a92b0"/><path d="M3.2 4.5 H15 L12 11 H0 Z" fill="#6a92b0"/></svg>
<div class="t" style="left:61px;top:170px;font-size:12.6px;color:#919fab">Prefabs</div>
<svg style="left:59px;top:187px" width="14" height="11" viewBox="0 0 14 11"><path d="M0 1 Q0 0 1 0 H5 L6.5 1.5 H13 Q14 1.5 14 2.5 V10 Q14 11 13 11 H1 Q0 11 0 10 Z" fill="#6a92b0"/></svg>
<div class="t" style="left:75px;top:186px;font-size:12.6px;color:#919fab">Box</div>
<svg style="left:59px;top:203px" width="14" height="11" viewBox="0 0 14 11"><path d="M0 1 Q0 0 1 0 H5 L6.5 1.5 H13 Q14 1.5 14 2.5 V10 Q14 11 13 11 H1 Q0 11 0 10 Z" fill="#6a92b0"/></svg>
<div class="t" style="left:75px;top:202px;font-size:12.6px;color:#919fab">Canvas</div>
<svg style="left:59px;top:219px" width="14" height="11" viewBox="0 0 14 11"><path d="M0 1 Q0 0 1 0 H5 L6.5 1.5 H13 Q14 1.5 14 2.5 V10 Q14 11 13 11 H1 Q0 11 0 10 Z" fill="#6a92b0"/></svg>
<div class="t" style="left:75px;top:218px;font-size:12.6px;color:#919fab">CraftingUI</div>
<svg style="left:59px;top:235px" width="14" height="11" viewBox="0 0 14 11"><path d="M0 1 Q0 0 1 0 H5 L6.5 1.5 H13 Q14 1.5 14 2.5 V10 Q14 11 13 11 H1 Q0 11 0 10 Z" fill="#6a92b0"/></svg>
<div class="t" style="left:75px;top:234px;font-size:12.6px;color:#919fab">DecompoisitionUI</div>
<svg style="left:59px;top:251px" width="14" height="11" viewBox="0 0 14 11"><path d="M0 1 Q0 0 1 0 H5 L6.5 1.5 H13 Q14 1.5 14 2.5 V10 Q14 11 13 11 H1 Q0 11 0 10 Z" fill="#6a92b0"/></svg>
<div class="t" style="left:75px;top:250px;font-size:12.6px;color:#919fab">InventoryUI</div>
<svg style="left:59px;top:267px" width="14" height="11" viewBox="0 0 14 11"><path d="M0 1 Q0 0 1 0 H5 L6.5 1.5 H13 Q14 1.5 14 2.5 V10 Q14 11 13 11 H1 Q0 11 0 10 Z" fill="#6a92b0"/></svg>
<div class="t" style="left:75px;top:266px;font-size:12.6px;color:#919fab">Temp</div>
<svg style="left:45px;top:283px" width="14" height="11" viewBox="0 0 14 11"><path d="M0.6 1 Q0.6 0.6 1 0.6 H5 L6.5 2 H12.5 Q13.4 2 13.4 3 V10 Q13.4 10.4 13 10.4 H1 Q0.6 10.4 0.6 10 Z" fill="none" stroke="#6a92b0" stroke-width="1.1"/></svg>
<div class="t" style="left:61px;top:282px;font-size:12.6px;color:#919fab">RecipeData</div>
<svg style="left:33px;top:301px" width="9" height="7"><path d="M0 0 H9 L4.5 7 Z" fill="#34475a"/></svg>
<svg style="left:45px;top:299px" width="15" height="11" viewBox="0 0 15 11"><path d="M0 1 Q0 0 1 0 H5 L6.5 1.5 H11 Q12 1.5 12 2.5 V4 H3 L0 10 Z" fill="#6a92b0"/><path d="M3.2 4.5 H15 L12 11 H0 Z" fill="#6a92b0"/></svg>
<div class="t" style="left:61px;top:298px;font-size:12.6px;color:#919fab">Scripts</div>
<svg style="left:47px;top:317px" width="9" height="7"><path d="M0 0 H9 L4.5 7 Z" fill="#34475a"/></svg>
<svg style="left:59px;top:315px" width="15" height="11" viewBox="0 0 15 11"><path d="M0 1 Q0 0 1 0 H5 L6.5 1.5 H11 Q12 1.5 12 2.5 V4 H3 L0 10 Z" fill="#6a92b0"/><path d="M3.2 4.5 H15 L12 11 H0 Z" fill="#6a92b0"/></svg>
<div class="t" style="left:75px;top:314px;font-size:12.6px;color:#919fab">Box</div>
<svg style="left:73px;top:331px" width="14" height="11" viewBox="0 0 14 11"><path d="M0 1 Q0 0 1 0 H5 L6.5 1.5 H13 Q14 1.5 14 2.5 V10 Q14 11 13 11 H1 Q0 11 0 10 Z" fill="#6a92b0"/></svg>
<div class="t" style="left:89px;top:330px;font-size:12.6px;color:#919fab">Item Random S</div>
</div>
<div class="a" style="left:958px;top:670px;width:10px;height:324px;background:#152830"></div><div class="a" style="left:956px;top:994px;width:12px;height:16px;background:#24384a"></div>
<svg style="left:959px;top:672px" width="8" height="6"><path d="M0 6 H8 L4 0 Z" fill="#7ab0e0"/></svg>
<div class="a" style="left:959px;top:757px;width:8px;height:70px;background:#2c4256;border-radius:4px"></div>
<div class="a" style="left:968px;top:667px;width:2px;height:343px;background:#0f1a24"></div>
<svg style="left:959px;top:1000px" width="9" height="6"><path d="M0 0 H9 L4.5 6 Z" fill="#8fb4d4"/></svg>

<div class="a" style="left:970px;top:667px;width:495px;height:20px;background:#1b303a"></div>
<div class="t" style="left:974px;top:671px;font-size:12.5px;color:#8a9cac;">Assets</div>
<svg style="left:1018px;top:672px" width="6" height="10"><path d="M0.5 0.5 L5 5 L0.5 9.5" fill="none" stroke="#5a7080" stroke-width="1.2"/></svg>
<div class="t" style="left:1029px;top:671px;font-size:12.5px;color:#8a9cac;">LHW</div>
<svg style="left:1064px;top:672px" width="6" height="10"><path d="M0.5 0.5 L5 5 L0.5 9.5" fill="none" stroke="#5a7080" stroke-width="1.2"/></svg>
<div class="t" style="left:1074px;top:671px;font-size:12.5px;color:#8a9cac;">Scripts</div>
<svg style="left:1120px;top:672px" width="6" height="10"><path d="M0.5 0.5 L5 5 L0.5 9.5" fill="none" stroke="#5a7080" stroke-width="1.2"/></svg>
<div class="t" style="left:1131px;top:671px;font-size:12.5px;color:#8a9cac;">Box</div>
<svg style="left:1161px;top:672px" width="6" height="10"><path d="M0.5 0.5 L5 5 L0.5 9.5" fill="none" stroke="#5a7080" stroke-width="1.2"/></svg>
<div class="t" style="left:1170px;top:671px;font-size:12.5px;color:#a8b8c4;font-weight:bold;">Item Random System</div>
<div class="a" style="left:981px;top:763px;width:71px;height:15px;background:#24384a;border-radius:3px"></div>
<svg style="left:993px;top:701px" width="49" height="57" viewBox="0 0 49 57"><path d="M0 4 Q0 0 4 0 H35 L49 14 V52 Q49 57 44 57 H5 Q0 57 0 52 Z" fill="#5ea4ea"/><path d="M35 0 V14 H49 Z" fill="#4a8ad0"/><path d="M19 13 L15 45 M33 13 L29 45 M9 23 H41 M7.5 35 H39.5" stroke="#145a22" stroke-width="5.2"/></svg>
<svg style="left:1069px;top:701px" width="49" height="57" viewBox="0 0 49 57"><path d="M0 4 Q0 0 4 0 H35 L49 14 V52 Q49 57 44 57 H5 Q0 57 0 52 Z" fill="#5ea4ea"/><path d="M35 0 V14 H49 Z" fill="#4a8ad0"/><path d="M19 13 L15 45 M33 13 L29 45 M9 23 H41 M7.5 35 H39.5" stroke="#145a22" stroke-width="5.2"/></svg>
<div class="t" style="left:987px;top:766px;font-size:10.5px;color:#9aaab8">BoxItemRa...</div>
<div class="t" style="left:1062px;top:766px;font-size:10.5px;color:#9aaab8">WeightedR...</div>
<div class="a" style="left:970px;top:990px;width:495px;height:20px;background:#1a2c37;border-top:1px solid #0f1a24"></div>
<svg style="left:975px;top:993px" width="12" height="14" viewBox="0 0 12 14"><path d="M0 1 Q0 0 1 0 H8.5 L12 3.5 V13 Q12 14 11 14 H1 Q0 14 0 13 Z" fill="#5ea4ea"/><path d="M4.3 3 L3.3 11.5 M8 3 L7 11.5 M2 5.5 H10 M1.6 8.8 H9.6" stroke="#145a22" stroke-width="1.3"/></svg>
<div class="a" style="left:990px;top:991px;width:400px;height:19px;overflow:hidden"><div class="t" style="left:0;top:3px;font-size:12.5px;color:#8fa6bc">Assets/LHW/Scripts/Box/Item Random System/BoxItemRandomSystem.cs</div></div>
<div class="a" style="left:1393px;top:999px;width:57px;height:1px;background:#3e5264"></div>
<div class="a" style="left:1421px;top:995px;width:9px;height:9px;border-radius:5px;background:#7c9cb8"></div>
<!-- status bar -->
<div class="a" style="left:0;top:1010px;width:1920px;height:22px;background:#161615"></div>
<svg style="left:4px;top:1014px" width="14" height="13" viewBox="0 0 14 13"><path d="M7 0.5 L13.5 12.5 H0.5 Z" fill="#e8c030"/><rect x="6.3" y="4" width="1.4" height="5" fill="#0b1620"/><rect x="6.3" y="10" width="1.4" height="1.4" fill="#0b1620"/></svg>
<div class="t" style="left:20px;top:1016px;font-size:12.65px;color:#e4b838">Assets\LHW\Scripts\Crafting\UI\CraftingController.cs(83,9): warning CS0162: Unreachable code detected</div>
<svg style="left:1820px;top:1014px" width="15" height="15" viewBox="0 0 15 15"><ellipse cx="7.5" cy="9" rx="4.5" ry="5" fill="#a8b8c4"/><path d="M1 4 L4 6 M14 4 L11 6 M0.5 9 H3 M14.5 9 H12 M1 14 L3.5 12 M14 14 L11.5 12" stroke="#a8b8c4"/><path d="M1 1 L14 14" stroke="#0b1620" stroke-width="2"/><path d="M1.5 1.5 L13.5 13.5" stroke="#a8b8c4" stroke-width="1"/></svg>
<svg style="left:1847px;top:1014px" width="15" height="15" viewBox="0 0 15 15"><ellipse cx="7.5" cy="3" rx="6" ry="2.5" fill="#a8b8c4"/><path d="M1.5 5.5 Q7.5 9 13.5 5.5 V8 Q7.5 11.5 1.5 8 Z M1.5 10 Q7.5 13.5 13.5 10 V12 Q7.5 15.5 1.5 12 Z" fill="#a8b8c4"/></svg>
<svg style="left:1873px;top:1014px" width="15" height="15" viewBox="0 0 15 15"><circle cx="7.5" cy="7.5" r="5.5" fill="none" stroke="#a8b8c4" stroke-width="1.4"/><path d="M7.5 1 V14 M1 7.5 H14" stroke="#a8b8c4" stroke-width="1.2"/><path d="M1 1 L14 14" stroke="#a8b8c4" stroke-width="1.4"/></svg>
<svg style="left:1898px;top:1014px" width="15" height="15" viewBox="0 0 15 15"><circle cx="7.5" cy="7.5" r="6.5" fill="none" stroke="#a8b8c4" stroke-width="1.3"/><path d="M4.5 7.5 L6.8 10 L10.8 5" fill="none" stroke="#a8b8c4" stroke-width="1.4"/></svg>

<!-- taskbar -->
<div class="a" style="left:0;top:1032px;width:1920px;height:48px;background:linear-gradient(90deg,#def2dc 0px,#def2dc 430px,#e8e9e6 560px,#ede8e4 760px,#f5e7d9 920px,#f5e7d9 1500px,#ebe6e2 1620px,#e8e6ea 1920px)"></div>
<!-- weather -->
<svg style="left:20px;top:1040px" width="30" height="28" viewBox="0 0 30 28"><path d="M8 2 A8 8 0 1 0 16 12 A6 6 0 0 1 8 2 Z" fill="#f0b020"/><path d="M6 27 Q0 27 1 21 Q2 16 7 17 Q9 11 16 12 Q23 12 24 18 Q29 18 29 22.5 Q29 27 24 27 Z" fill="#c8d8f0" stroke="#98a8c8" stroke-width="0.8"/></svg>
<div class="a" style="left:30px;top:1038px;width:16px;height:16px;border-radius:8px;background:#c42828"></div>
<div class="t" style="left:32px;top:1041px;font-size:10px;color:#fff">9+</div>
<div class="t" style="left:50px;top:1041px;font-size:12px;color:#111">27°C</div>
<div class="t" style="left:50px;top:1057px;font-size:12px;color:#333">대제로 흐림</div>
<!-- start -->
<svg style="left:529px;top:1045px" width="23" height="23" viewBox="0 0 23 23"><rect x="0" y="0" width="11" height="11" fill="#3aa8e8"/><rect x="12" y="0" width="11" height="11" fill="#2a9ae0"/><rect x="0" y="12" width="11" height="11" fill="#1f88d8"/><rect x="12" y="12" width="11" height="11" fill="#1878d0"/></svg>
<!-- search -->
<div class="a" style="left:567px;top:1041px;width:215px;height:30px;border-radius:15px;background:#fafafa;border:1px solid #e0e0e0"></div>
<svg style="left:576px;top:1048px" width="17" height="17"><circle cx="7" cy="7" r="5.5" fill="none" stroke="#222" stroke-width="1.6"/><path d="M11 11 L15.5 15.5" stroke="#222" stroke-width="1.8"/></svg>
<div class="t" style="left:602px;top:1049px;font-size:13px;color:#555">검색</div>
<svg style="left:730px;top:1042px" width="52" height="28" viewBox="0 0 52 28"><ellipse cx="34" cy="15" rx="18" ry="12" fill="#d8b070"/><path d="M4 26 L12 10 L18 20 L24 6 L32 22 L38 14 L46 26 Z" fill="#8a6a40"/><ellipse cx="22" cy="22" rx="16" ry="5" fill="#58a8c8"/><circle cx="40" cy="12" r="6" fill="#c89050"/></svg>
<!-- task view -->
<svg style="left:796px;top:1046px" width="20" height="21"><rect x="5" y="0" width="15" height="15" fill="#fff" stroke="#ddd"/><rect x="0" y="6" width="15" height="15" fill="#222"/><rect x="3" y="9" width="9" height="9" fill="#ddd"/></svg>
<!-- explorer -->
<svg style="left:840px;top:1045px" width="26" height="22" viewBox="0 0 26 22"><path d="M0 2 Q0 0 2 0 H9 L11 3 H24 Q26 3 26 5 V20 Q26 22 24 22 H2 Q0 22 0 20 Z" fill="#f0c030"/><rect x="0" y="7" width="26" height="15" rx="1.5" fill="#f8d860"/><rect x="8" y="15" width="10" height="5" fill="#2a78c8"/></svg>
<div class="a" style="left:848px;top:1073px;width:10px;height:3px;border-radius:2px;background:#888"></div>
<!-- chrome -->
<svg style="left:884px;top:1042px" width="30" height="28" viewBox="0 0 30 28"><circle cx="14" cy="15" r="12" fill="#e84030"/><path d="M14 15 L2 15 A12 12 0 0 0 20 25.4 Z" fill="#30a850"/><path d="M14 15 L20 25.4 A12 12 0 0 0 26 15 Z" fill="#f8c020"/><path d="M14 15 L26 15 A12 12 0 0 0 24.4 9 L14 9 Z" fill="#f8c020"/><circle cx="14" cy="15" r="5.5" fill="#fff"/><circle cx="14" cy="15" r="4.3" fill="#2a78e8"/><circle cx="22" cy="8" r="7" fill="#2a5a6a"/><path d="M17 8 Q20 4 24 7 Q26 10 22 11" fill="none" stroke="#c04040" stroke-width="1.5"/></svg>
<div class="a" style="left:893px;top:1073px;width:10px;height:3px;border-radius:2px;background:#888"></div>
<!-- kakao -->
<div class="a" style="left:922px;top:1037px;width:37px;height:40px;border-radius:4px;background:#f0c8c4"></div>
<svg style="left:929px;top:1043px" width="24" height="24" viewBox="0 0 24 24"><rect x="0" y="0" width="24" height="24" rx="3" fill="#f8e020"/><ellipse cx="12" cy="11" rx="9" ry="7" fill="#3a2a20"/><path d="M7 16 L6 20 L10 17 Z" fill="#3a2a20"/><text x="4.5" y="13" font-family="Liberation Sans" font-size="5.5" font-weight="bold" fill="#f8e020">TALK</text></svg>
<div class="a" style="left:932px;top:1072px;width:18px;height:3px;border-radius:2px;background:#d03030"></div>
<!-- discord -->
<svg style="left:972px;top:1041px" width="30" height="28" viewBox="0 0 30 28"><circle cx="13" cy="15" r="12" fill="#5865f2"/><path d="M6 11 Q13 7 20 11 L21 19 Q13 22 5 19 Z" fill="#fff"/><circle cx="10" cy="15" r="1.6" fill="#5865f2"/><circle cx="16" cy="15" r="1.6" fill="#5865f2"/><circle cx="23" cy="6" r="6" fill="#e84040"/><circle cx="23" cy="6" r="3" fill="#fff"/></svg>
<div class="a" style="left:981px;top:1073px;width:10px;height:3px;border-radius:2px;background:#888"></div>
<!-- snipping -->
<svg style="left:1017px;top:1043px" width="26" height="26" viewBox="0 0 26 26"><path d="M1 1 H12 V12 H1 Z" fill="none" stroke="#d03030" stroke-width="2" stroke-dasharray="2 2"/><path d="M8 8 L22 20 M22 8 L8 20" stroke="#7a8a98" stroke-width="2"/><circle cx="22" cy="8" r="3" fill="none" stroke="#3a98d8" stroke-width="2"/><circle cx="22" cy="21" r="3" fill="none" stroke="#3a98d8" stroke-width="2"/></svg>
<div class="a" style="left:1025px;top:1073px;width:10px;height:3px;border-radius:2px;background:#888"></div>
<!-- github -->
<svg style="left:1060px;top:1043px" width="25" height="25"><circle cx="12.5" cy="12.5" r="11" fill="#fff" stroke="#7a30b0" stroke-width="3"/><circle cx="12.5" cy="12.5" r="8" fill="#7a30b0"/><path d="M8 9 L9 6 L11 8 H14 L16 6 L17 9 Q18 14 12.5 14 Q7 14 8 9 Z M10.5 14 V19 H14.5 V14" fill="#fff"/></svg>
<div class="a" style="left:1068px;top:1073px;width:10px;height:3px;border-radius:2px;background:#888"></div>
<!-- sticky notes -->
<svg style="left:1106px;top:1044px" width="23" height="23"><rect x="0" y="0" width="23" height="23" rx="2" fill="#2a2a2a"/><path d="M10 23 L23 12 V23 Z" fill="#f0d020"/></svg>
<div class="a" style="left:1112px;top:1073px;width:10px;height:3px;border-radius:2px;background:#888"></div>
<!-- chrome 2 -->
<svg style="left:1148px;top:1041px" width="30" height="28" viewBox="0 0 30 28"><circle cx="14" cy="16" r="12" fill="#e84030"/><path d="M14 16 L2 16 A12 12 0 0 0 20 26.4 Z" fill="#30a850"/><path d="M14 16 L20 26.4 A12 12 0 0 0 26 16 Z" fill="#f8c020"/><circle cx="14" cy="16" r="5.5" fill="#fff"/><circle cx="14" cy="16" r="4.3" fill="#2a78e8"/><circle cx="22" cy="8" r="7.5" fill="#1a9090"/><text x="17" y="11" font-family="Liberation Sans" font-size="7" fill="#fff">지우</text></svg>
<div class="a" style="left:1157px;top:1073px;width:10px;height:3px;border-radius:2px;background:#888"></div>
<!-- unity hub grey -->
<svg style="left:1193px;top:1045px" width="22" height="22" viewBox="0 0 22 22"><path d="M11 1 L20 6 V16 L11 21 L2 16 V6 Z" fill="#6a7078"/><path d="M11 5 L16 8 V14 L11 17 L6 14 V8 Z M6 8 L11 11 L16 8 M11 11 V17" fill="none" stroke="#e0e0e0" stroke-width="1.3"/></svg>
<div class="a" style="left:1200px;top:1073px;width:10px;height:3px;border-radius:2px;background:#888"></div>
<!-- notepad -->
<svg style="left:1239px;top:1043px" width="21" height="27"><rect x="0" y="2" width="21" height="23" fill="#40b0e8"/><path d="M3 8 H18 M3 12 H18 M3 16 H18 M3 20 H18" stroke="#1a5a90" stroke-width="1.3"/><rect x="0" y="23" width="21" height="3" fill="#c05028"/><path d="M4 0 V4 M8 0 V4 M12 0 V4 M16 0 V4" stroke="#1a5a90" stroke-width="1.5"/></svg>
<div class="a" style="left:1244px;top:1073px;width:10px;height:3px;border-radius:2px;background:#888"></div>
<!-- unity -->
<svg style="left:1282px;top:1044px" width="23" height="24" viewBox="0 0 23 24"><path d="M11.5 0.5 L22 6.5 V17.5 L11.5 23.5 L1 17.5 V6.5 Z" fill="#3a3a3a"/><path d="M11.5 5 L17 8 V15 L11.5 18 L6 15 V8 Z M6 8 L11.5 11.5 L17 8 M11.5 11.5 V18" fill="none" stroke="#f0f0f0" stroke-width="1.5"/></svg>
<div class="a" style="left:1288px;top:1073px;width:10px;height:3px;border-radius:2px;background:#888"></div>
<!-- visual studio -->
<svg style="left:1324px;top:1043px" width="26" height="26" viewBox="0 0 26 26"><path d="M18 1 L25 4 V22 L18 25 L6 14 L2 17 L0 16 V10 L2 9 L6 12 Z" fill="#8a5ad0"/><path d="M18 7 V19 L11 13 Z" fill="#d8c8f0"/></svg>
<div class="a" style="left:1332px;top:1073px;width:10px;height:3px;border-radius:2px;background:#888"></div>
<!-- obs -->
<div class="a" style="left:1362px;top:1037px;width:38px;height:40px;border-radius:4px;background:#f8f6f4"></div>
<svg style="left:1370px;top:1044px" width="22" height="22"><circle cx="11" cy="11" r="11" fill="#2a2a2e"/><circle cx="11" cy="11" r="8" fill="none" stroke="#e8e8e8" stroke-width="1.2" stroke-dasharray="9 3"/><circle cx="11" cy="11" r="3" fill="#e8e8e8"/></svg>
<div class="a" style="left:1374px;top:1072px;width:14px;height:3px;border-radius:2px;background:#1878d0"></div>
<!-- tray -->
<svg style="left:1656px;top:1051px" width="11" height="7"><path d="M0.5 6.5 L5.5 1 L10.5 6.5" fill="none" stroke="#222" stroke-width="1.5"/></svg>
<svg style="left:1685px;top:1047px" width="18" height="15" viewBox="0 0 18 15"><path d="M4 13 Q0 13 0.5 9 Q1 6 4 6.5 Q5 2 10 2 Q15 2 15 7 Q17.5 7.5 17.5 10 Q17.5 13 14 13 Z" fill="none" stroke="#222" stroke-width="1.5"/><path d="M2 1 L16 14" stroke="#222" stroke-width="1.5"/></svg>
<svg style="left:1721px;top:1045px" width="10" height="19"><rect x="2" y="0.8" width="6" height="11" rx="3" fill="none" stroke="#3a78c8" stroke-width="1.5"/><path d="M0.8 8 Q0.8 14.5 5 14.5 Q9.2 14.5 9.2 8 M5 14.5 V18" fill="none" stroke="#3a78c8" stroke-width="1.4"/></svg>
<div class="t" style="left:1750px;top:1044px;font-size:19px;color:#222">A</div>
<svg style="left:1781px;top:1046px" width="17" height="18" viewBox="0 0 17 18"><rect x="0.8" y="3" width="12" height="9" fill="none" stroke="#222" stroke-width="1.3"/><path d="M6 12 V15 M3 15.5 H10" stroke="#222" stroke-width="1.3"/><rect x="11" y="0.8" width="5" height="7" rx="2" fill="#fff" stroke="#222" stroke-width="1.2"/></svg>
<svg style="left:1806px;top:1048px" width="15" height="14" viewBox="0 0 15 14"><path d="M0.8 4.5 H3.5 L7 1.5 V12.5 L3.5 9.5 H0.8 Z" fill="none" stroke="#222" stroke-width="1.2"/><path d="M9.5 4.5 Q11 7 9.5 9.5 M11.5 2.5 Q14.5 7 11.5 11.5" fill="none" stroke="#222" stroke-width="1.2"/></svg>
<div class="t" style="left:1851px;top:1041px;font-size:12px;color:#111">오후 9:36</div>
<div class="t" style="left:1837px;top:1058px;font-size:12px;color:#111">2025-07-02</div>
</body></html>
